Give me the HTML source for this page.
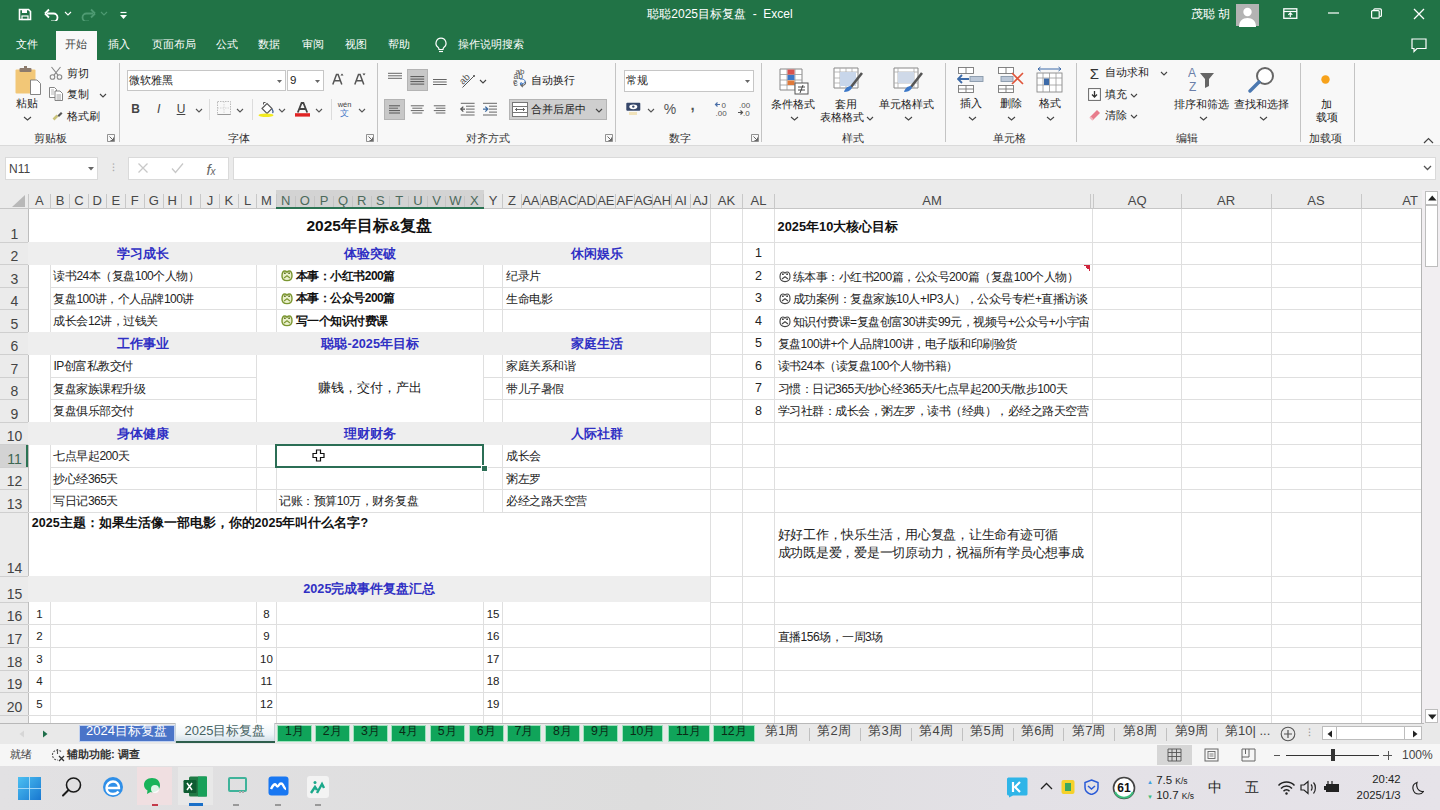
<!DOCTYPE html>
<html><head><meta charset="utf-8"><style>
html,body{margin:0;padding:0;width:1440px;height:810px;overflow:hidden;background:#fff;font-family:"Liberation Sans", sans-serif;}
.a{position:absolute;}
.t{white-space:nowrap;}
</style></head><body>
<div class="a" style="left:0.00px;top:0.00px;width:1440.00px;height:60.00px;background:#217346"></div>
<svg class="a" style="left:18.00px;top:8.00px;" width="14" height="13" viewBox="0 0 14 13"><path d="M1.5 1.5h9l2 2v8h-11z" fill="none" stroke="#fff" stroke-width="1.6"/><rect x="4" y="1.5" width="5" height="3.5" fill="#fff"/><rect x="4" y="8" width="6" height="3.5" fill="none" stroke="#fff" stroke-width="1.2"/></svg>
<svg class="a" style="left:44.00px;top:8.00px;" width="16" height="13" viewBox="0 0 16 13"><path d="M3 5.5h6.5a4 4 0 0 1 0 8H7" fill="none" stroke="#fff" stroke-width="1.8"/><path d="M1 5.5l4-4M1 5.5l4 4" fill="none" stroke="#fff" stroke-width="1.8"/></svg>
<svg class="a" style="left:64.00px;top:11.00px;" width="8" height="6" viewBox="0 0 8 6"><path d="M1 1l3 3 3-3" fill="none" stroke="#fff" stroke-width="1.1"/></svg>
<svg class="a" style="left:80.00px;top:8.00px;" width="16" height="13" viewBox="0 0 16 13"><path d="M13 5.5H6.5a4 4 0 0 0 0 8H9" fill="none" stroke="#4e9a72" stroke-width="1.8"/><path d="M15 5.5l-4-4M15 5.5l-4 4" fill="none" stroke="#4e9a72" stroke-width="1.8"/></svg>
<svg class="a" style="left:100.00px;top:11.00px;" width="8" height="6" viewBox="0 0 8 6"><path d="M1 1l3 3 3-3" fill="none" stroke="#4e9a72" stroke-width="1.1"/></svg>
<svg class="a" style="left:119.00px;top:11.00px;" width="9" height="9" viewBox="0 0 9 9"><path d="M1.5 1.5h6" stroke="#fff" stroke-width="1.2"/><path d="M1 4h7l-3.5 4z" fill="#fff"/></svg>
<div class="a t" style="left:570.00px;width:300px;text-align:center;top:6.00px;line-height:16.80px;font-size:12px;color:#fff;">聪聪2025目标复盘&nbsp; -&nbsp; Excel</div>
<div class="a t" style="left:1190.50px;top:6.00px;line-height:16.80px;font-size:12px;color:#fff;">茂聪 胡</div>
<div class="a" style="left:1236.00px;top:3.50px;width:22.50px;height:22.50px;background:#b3b3b3"></div>
<svg class="a" style="left:1236.00px;top:3.50px;" width="23" height="23" viewBox="0 0 23 23"><circle cx="11.5" cy="8" r="4.2" fill="#fff"/><path d="M3 23c0-6 3.5-9 8.5-9s8.5 3 8.5 9z" fill="#fff"/></svg>
<svg class="a" style="left:1283.00px;top:8.00px;" width="15" height="11" viewBox="0 0 15 11"><rect x="0.8" y="0.8" width="13" height="9.5" fill="none" stroke="#fff" stroke-width="1.3"/><path d="M0.8 3.5h13" stroke="#fff" stroke-width="1.2"/><path d="M7.3 9V5M5.3 6.8l2-2 2 2" fill="none" stroke="#fff" stroke-width="1.1"/></svg>
<svg class="a" style="left:1328.00px;top:12.00px;" width="11" height="2" viewBox="0 0 11 2"><path d="M0 1h11" stroke="#fff" stroke-width="1.2"/></svg>
<svg class="a" style="left:1371.00px;top:8.00px;" width="11" height="11" viewBox="0 0 11 11"><rect x="0.6" y="2.6" width="7.6" height="7.6" rx="1" fill="none" stroke="#fff" stroke-width="1.2"/><path d="M2.8 2.6v-0.8a1 1 0 0 1 1-1h5.4a1.2 1.2 0 0 1 1.2 1.2v5.4a1 1 0 0 1-1 1h-0.8" fill="none" stroke="#fff" stroke-width="1.2"/></svg>
<svg class="a" style="left:1413.00px;top:7.50px;" width="12" height="12" viewBox="0 0 12 12"><path d="M1 1l10 10M11 1L1 11" stroke="#fff" stroke-width="1.3"/></svg>
<svg class="a" style="left:1411.00px;top:38.00px;" width="16" height="15" viewBox="0 0 16 15"><path d="M1 1h14v9.5H6l-3 3v-3H1z" fill="none" stroke="#fff" stroke-width="1.2"/></svg>
<div class="a" style="left:56.40px;top:31.00px;width:41.00px;height:29.50px;background:#f8f8f8"></div>
<div class="a t" style="left:15.60px;top:37.09px;line-height:15.82px;font-size:11.3px;color:#fff;">文件</div>
<div class="a t" style="left:65.20px;top:37.09px;line-height:15.82px;font-size:11.3px;color:#444;">开始</div>
<div class="a t" style="left:108.00px;top:37.09px;line-height:15.82px;font-size:11.3px;color:#fff;">插入</div>
<div class="a t" style="left:151.80px;top:37.09px;line-height:15.82px;font-size:11.3px;color:#fff;">页面布局</div>
<div class="a t" style="left:216.00px;top:37.09px;line-height:15.82px;font-size:11.3px;color:#fff;">公式</div>
<div class="a t" style="left:258.30px;top:37.09px;line-height:15.82px;font-size:11.3px;color:#fff;">数据</div>
<div class="a t" style="left:302.00px;top:37.09px;line-height:15.82px;font-size:11.3px;color:#fff;">审阅</div>
<div class="a t" style="left:344.80px;top:37.09px;line-height:15.82px;font-size:11.3px;color:#fff;">视图</div>
<div class="a t" style="left:387.50px;top:37.09px;line-height:15.82px;font-size:11.3px;color:#fff;">帮助</div>
<div class="a t" style="left:458.30px;top:37.09px;line-height:15.82px;font-size:11.3px;color:#fff;">操作说明搜索</div>
<svg class="a" style="left:434.00px;top:37.00px;" width="14" height="16" viewBox="0 0 14 16"><path d="M7 1.2a5 5 0 0 0-3 9c0.8 0.6 1 1.4 1 2.3h4c0-0.9 0.2-1.7 1-2.3a5 5 0 0 0-3-9z" fill="none" stroke="#fff" stroke-width="1.2"/><path d="M5 14.5h4" stroke="#fff" stroke-width="1.2"/></svg>
<div class="a" style="left:0.00px;top:60.00px;width:1440.00px;height:84.50px;background:#f8f8f8"></div>
<div class="a" style="left:0.00px;top:144.50px;width:1440.00px;height:1.00px;background:#dadada"></div>
<div class="a" style="left:118.50px;top:63.00px;width:1.00px;height:79.00px;background:#c4c4c4"></div>
<div class="a" style="left:376.50px;top:63.00px;width:1.00px;height:79.00px;background:#c4c4c4"></div>
<div class="a" style="left:615.30px;top:63.00px;width:1.00px;height:79.00px;background:#c4c4c4"></div>
<div class="a" style="left:760.60px;top:63.00px;width:1.00px;height:79.00px;background:#c4c4c4"></div>
<div class="a" style="left:944.50px;top:63.00px;width:1.00px;height:79.00px;background:#c4c4c4"></div>
<div class="a" style="left:1076.30px;top:63.00px;width:1.00px;height:79.00px;background:#c4c4c4"></div>
<div class="a" style="left:1299.70px;top:63.00px;width:1.00px;height:79.00px;background:#c4c4c4"></div>
<div class="a" style="left:1353.60px;top:63.00px;width:1.00px;height:79.00px;background:#c4c4c4"></div>
<div class="a t" style="left:0.80px;width:100px;text-align:center;top:131.09px;line-height:15.82px;font-size:11.3px;color:#333;">剪贴板</div>
<div class="a t" style="left:189.30px;width:100px;text-align:center;top:131.09px;line-height:15.82px;font-size:11.3px;color:#333;">字体</div>
<div class="a t" style="left:437.80px;width:100px;text-align:center;top:131.09px;line-height:15.82px;font-size:11.3px;color:#333;">对齐方式</div>
<div class="a t" style="left:630.30px;width:100px;text-align:center;top:131.09px;line-height:15.82px;font-size:11.3px;color:#333;">数字</div>
<div class="a t" style="left:802.60px;width:100px;text-align:center;top:131.09px;line-height:15.82px;font-size:11.3px;color:#333;">样式</div>
<div class="a t" style="left:959.00px;width:100px;text-align:center;top:131.09px;line-height:15.82px;font-size:11.3px;color:#333;">单元格</div>
<div class="a t" style="left:1136.80px;width:100px;text-align:center;top:131.09px;line-height:15.82px;font-size:11.3px;color:#333;">编辑</div>
<div class="a t" style="left:1275.90px;width:100px;text-align:center;top:131.09px;line-height:15.82px;font-size:11.3px;color:#333;">加载项</div>
<svg class="a" style="left:107.00px;top:134.00px;" width="8" height="8" viewBox="0 0 8 8"><path d="M0.5 0.5h7v7h-7z" fill="none" stroke="#777" stroke-width="0.8"/><path d="M2.5 2.5l4 4M6.5 3.5v3h-3" fill="none" stroke="#555" stroke-width="0.9"/></svg>
<svg class="a" style="left:366.00px;top:134.00px;" width="8" height="8" viewBox="0 0 8 8"><path d="M0.5 0.5h7v7h-7z" fill="none" stroke="#777" stroke-width="0.8"/><path d="M2.5 2.5l4 4M6.5 3.5v3h-3" fill="none" stroke="#555" stroke-width="0.9"/></svg>
<svg class="a" style="left:605.00px;top:134.00px;" width="8" height="8" viewBox="0 0 8 8"><path d="M0.5 0.5h7v7h-7z" fill="none" stroke="#777" stroke-width="0.8"/><path d="M2.5 2.5l4 4M6.5 3.5v3h-3" fill="none" stroke="#555" stroke-width="0.9"/></svg>
<svg class="a" style="left:751.00px;top:134.00px;" width="8" height="8" viewBox="0 0 8 8"><path d="M0.5 0.5h7v7h-7z" fill="none" stroke="#777" stroke-width="0.8"/><path d="M2.5 2.5l4 4M6.5 3.5v3h-3" fill="none" stroke="#555" stroke-width="0.9"/></svg>
<svg class="a" style="left:1423.00px;top:137.00px;" width="11" height="7" viewBox="0 0 11 7"><path d="M1 6l4.5-4.5L10 6" fill="none" stroke="#444" stroke-width="1.2"/></svg>
<svg class="a" style="left:14.00px;top:66.00px;" width="30" height="30" viewBox="0 0 30 30"><rect x="1.5" y="3.5" width="20" height="24" rx="1" fill="#f2c777"/><rect x="5.5" y="2" width="12" height="4" rx="1" fill="#8d7b6d"/><rect x="10" y="0" width="3" height="3" fill="#8d7b6d"/><path d="M16.5 14h6.5l3.5 3.5v11h-10z" fill="#fff" stroke="#777" stroke-width="0.9"/></svg>
<div class="a t" style="left:6.50px;width:40px;text-align:center;top:95.59px;line-height:15.82px;font-size:11.3px;color:#222;">粘贴</div>
<svg class="a" style="left:23.00px;top:116.00px;" width="9" height="5" viewBox="0 0 9 5"><path d="M1 1l3.5 3L8 1" fill="none" stroke="#444" stroke-width="1.1"/></svg>
<svg class="a" style="left:49.00px;top:66.00px;" width="14" height="14" viewBox="0 0 14 14"><circle cx="3.5" cy="11" r="2.3" fill="none" stroke="#888" stroke-width="1.1"/><circle cx="10.5" cy="11" r="2.3" fill="none" stroke="#888" stroke-width="1.1"/><path d="M5 9.2L11.5 1M9 9.2L2.5 1" stroke="#888" stroke-width="1.1"/></svg>
<div class="a t" style="left:67.00px;top:65.59px;line-height:15.82px;font-size:11.3px;color:#222;">剪切</div>
<svg class="a" style="left:49.00px;top:87.00px;" width="14" height="14" viewBox="0 0 14 14"><path d="M0.5 0.5h5l2 2v8h-7z" fill="#fff" stroke="#777" stroke-width="0.9"/><path d="M2 3h3M2 5h3M2 7h3" stroke="#999" stroke-width="0.7"/><path d="M6 4h5l2.5 2.5v7H6z" fill="#fff" stroke="#777" stroke-width="0.9"/><path d="M7.5 8h4.5M7.5 10h4.5M7.5 12h4.5" stroke="#888" stroke-width="0.8"/></svg>
<div class="a t" style="left:67.00px;top:87.09px;line-height:15.82px;font-size:11.3px;color:#222;">复制</div>
<svg class="a" style="left:99.00px;top:93.00px;" width="8" height="5" viewBox="0 0 8 5"><path d="M1 1l3 3 3-3" fill="none" stroke="#444" stroke-width="1.1"/></svg>
<svg class="a" style="left:52.00px;top:110.00px;" width="11" height="11" viewBox="0 0 11 11"><path d="M1.5 9.5l4-4" stroke="#c9c27a" stroke-width="2.6"/><path d="M5.5 5.5l3.5-3.5 1.5 1.5-3.5 3.5z" fill="#555"/></svg>
<div class="a t" style="left:67.00px;top:108.59px;line-height:15.82px;font-size:11.3px;color:#222;">格式刷</div>
<div class="a" style="left:126.50px;top:69.60px;width:159.00px;height:21.80px;background:#fff;border:1px solid #c6c6c6;box-sizing:border-box"></div>
<div class="a t" style="left:129.00px;top:72.59px;line-height:15.82px;font-size:11.3px;color:#222;">微软雅黑</div>
<svg class="a" style="left:276.50px;top:79.50px;" width="5" height="3" viewBox="0 0 5 3"><path d="M0 0h5L2.5 3z" fill="#666"/></svg>
<div class="a" style="left:287.40px;top:69.60px;width:36.60px;height:21.80px;background:#fff;border:1px solid #c6c6c6;box-sizing:border-box"></div>
<div class="a t" style="left:290.00px;top:72.45px;line-height:16.10px;font-size:11.5px;color:#222;">9</div>
<svg class="a" style="left:314.50px;top:79.50px;" width="5" height="3" viewBox="0 0 5 3"><path d="M0 0h5L2.5 3z" fill="#666"/></svg>
<svg class="a" style="left:332.00px;top:73.00px;" width="12" height="12" viewBox="0 0 12 12"><path d="M0.8 11.5L4.5 1.5h1.6L9.8 11.5M2.5 7.8h5.6" fill="none" stroke="#555" stroke-width="1.5"/><path d="M8.5 2.5L10 0.5l1.5 2z" fill="#444"/></svg>
<svg class="a" style="left:354.00px;top:73.00px;" width="12" height="12" viewBox="0 0 12 12"><path d="M0.8 11.5L4.5 1.5h1.6L9.8 11.5M2.5 7.8h5.6" fill="none" stroke="#555" stroke-width="1.5"/><path d="M8.5 0.5h3L10 2.5z" fill="#444"/></svg>
<div class="a t" style="left:128.50px;width:14px;text-align:center;top:101.10px;line-height:16.80px;font-size:12px;color:#444;font-weight:bold;">B</div>
<div class="a t" style="left:151.80px;width:14px;text-align:center;top:100.75px;line-height:17.50px;font-size:12.5px;color:#444;font-family:"Liberation Serif",serif"><i>I</i></div>
<div class="a t" style="left:174.00px;width:14px;text-align:center;top:101.10px;line-height:16.80px;font-size:12px;color:#444;"><u>U</u></div>
<svg class="a" style="left:194.50px;top:108.00px;" width="8" height="5" viewBox="0 0 8 5"><path d="M1 1l3 3 3-3" fill="none" stroke="#555" stroke-width="1.1"/></svg>
<svg class="a" style="left:236.00px;top:108.00px;" width="8" height="5" viewBox="0 0 8 5"><path d="M1 1l3 3 3-3" fill="none" stroke="#555" stroke-width="1.1"/></svg>
<svg class="a" style="left:278.00px;top:108.00px;" width="8" height="5" viewBox="0 0 8 5"><path d="M1 1l3 3 3-3" fill="none" stroke="#555" stroke-width="1.1"/></svg>
<svg class="a" style="left:315.00px;top:108.00px;" width="8" height="5" viewBox="0 0 8 5"><path d="M1 1l3 3 3-3" fill="none" stroke="#555" stroke-width="1.1"/></svg>
<svg class="a" style="left:358.00px;top:108.00px;" width="8" height="5" viewBox="0 0 8 5"><path d="M1 1l3 3 3-3" fill="none" stroke="#555" stroke-width="1.1"/></svg>
<div class="a" style="left:209.00px;top:99.00px;width:1.00px;height:21.00px;background:#dcdcdc"></div>
<div class="a" style="left:252.00px;top:99.00px;width:1.00px;height:21.00px;background:#dcdcdc"></div>
<div class="a" style="left:330.80px;top:99.00px;width:1.00px;height:21.00px;background:#dcdcdc"></div>
<svg class="a" style="left:217.00px;top:101.00px;" width="14" height="15" viewBox="0 0 14 15"><rect x="0.5" y="0.5" width="13" height="13" fill="none" stroke="#bbb" stroke-width="1" stroke-dasharray="1.5 1"/><path d="M7 0.5v13M0.5 7h13" stroke="#ccc" stroke-width="0.8" stroke-dasharray="1.5 1"/><path d="M0.5 13.5h13" stroke="#999" stroke-width="1"/></svg>
<svg class="a" style="left:257.00px;top:101.00px;" width="18" height="16" viewBox="0 0 18 16"><path d="M5 7.5l5-5 5 5-5 5z" fill="#fff" stroke="#555" stroke-width="1.1"/><path d="M6.5 3.5V1.5h2" fill="none" stroke="#555" stroke-width="1"/><path d="M15 8c1 1.5 1.5 3 0.5 4" fill="none" stroke="#3a5a90" stroke-width="1.2"/><ellipse cx="9" cy="14.3" rx="7.5" ry="1.8" fill="#f2ea20"/></svg>
<svg class="a" style="left:295.00px;top:102.00px;" width="15" height="15" viewBox="0 0 15 15"><path d="M2.8 10.5L6.6 1h1.8l3.8 9.5M4.3 7h6.4" fill="none" stroke="#444" stroke-width="1.8"/><rect x="0" y="11.2" width="15" height="3.4" fill="#e02424"/></svg>
<div class="a t" style="left:334.60px;width:20px;text-align:center;top:99.75px;line-height:10.50px;font-size:7.5px;color:#444;">wén</div>
<div class="a t" style="left:334.60px;width:20px;text-align:center;top:107.85px;line-height:11.90px;font-size:8.5px;color:#4a7ac8;">文</div>
<div class="a" style="left:407.00px;top:69.40px;width:20.80px;height:21.60px;background:#c8c8c8;border:1px solid #b4b4b4;box-sizing:border-box"></div>
<div class="a" style="left:384.40px;top:98.90px;width:20.80px;height:21.40px;background:#c8c8c8;border:1px solid #b4b4b4;box-sizing:border-box"></div>
<svg class="a" style="left:0.00px;top:0.00px;" width="500" height="130" viewBox="0 0 500 130"><path d="M388.00 73.30H402.00" stroke="#666" stroke-width="1.0"/><path d="M388.00 75.80H402.00" stroke="#666" stroke-width="1.0"/><path d="M388.00 78.30H402.00" stroke="#666" stroke-width="1.0"/><path d="M410.40 76.60H424.20" stroke="#555" stroke-width="1.0"/><path d="M410.40 79.10H424.20" stroke="#555" stroke-width="1.0"/><path d="M410.40 81.60H424.20" stroke="#555" stroke-width="1.0"/><path d="M410.40 84.10H424.20" stroke="#555" stroke-width="1.0"/><path d="M433.00 79.50H446.70" stroke="#666" stroke-width="1.0"/><path d="M433.00 82.00H446.70" stroke="#666" stroke-width="1.0"/><path d="M433.00 84.50H446.70" stroke="#666" stroke-width="1.0"/><path d="M389.00 105.80H400.00" stroke="#555" stroke-width="1.0"/><path d="M389.00 113.00H400.00" stroke="#555" stroke-width="1.0"/><path d="M389.00 108.20H398.00" stroke="#666" stroke-width="1.0"/><path d="M389.00 110.60H400.00" stroke="#555" stroke-width="1.0"/><path d="M410.80 105.80H423.80" stroke="#666" stroke-width="1.0"/><path d="M410.80 110.60H423.80" stroke="#666" stroke-width="1.0"/><path d="M412.30 108.20H422.30" stroke="#666" stroke-width="1.0"/><path d="M412.30 113.00H422.30" stroke="#666" stroke-width="1.0"/><path d="M433.80 105.80H445.40" stroke="#666" stroke-width="1.0"/><path d="M433.80 110.60H445.40" stroke="#666" stroke-width="1.0"/><path d="M435.80 108.20H445.40" stroke="#666" stroke-width="1.0"/><path d="M435.80 113.00H445.40" stroke="#666" stroke-width="1.0"/><path d="M460.80 103.30H474.60" stroke="#666" stroke-width="1.0"/><path d="M460.80 115.00H474.60" stroke="#666" stroke-width="1.0"/><path d="M466.00 106.20H474.60" stroke="#666" stroke-width="1.0"/><path d="M466.00 109.10H474.60" stroke="#666" stroke-width="1.0"/><path d="M466.00 112.10H474.60" stroke="#666" stroke-width="1.0"/><path d="M483.00 103.30H497.00" stroke="#666" stroke-width="1.0"/><path d="M483.00 115.00H497.00" stroke="#666" stroke-width="1.0"/><path d="M489.00 106.20H497.00" stroke="#666" stroke-width="1.0"/><path d="M489.00 109.10H497.00" stroke="#666" stroke-width="1.0"/><path d="M489.00 112.10H497.00" stroke="#666" stroke-width="1.0"/><path d="M465 109.1h-4.2M463.3 106.6l-2.5 2.5 2.5 2.5" fill="none" stroke="#555" stroke-width="1.3"/><path d="M483 109.1h4.6M485.3 106.6l2.5 2.5-2.5 2.5" fill="none" stroke="#3c6aa0" stroke-width="1.3"/><text x="0" y="0" font-size="9.5" fill="#555" font-family="Liberation Sans" transform="translate(463 85) rotate(-45)">ab</text><path d="M462.5 87.5L474.5 75.5" stroke="#555" stroke-width="1"/><circle cx="474" cy="76" r="1" fill="#555"/></svg>
<svg class="a" style="left:478.50px;top:78.50px;" width="8" height="5" viewBox="0 0 8 5"><path d="M1 1l3 3 3-3" fill="none" stroke="#444" stroke-width="1.1"/></svg>
<svg class="a" style="left:512.00px;top:71.00px;" width="16" height="17" viewBox="0 0 16 17"><text x="1.5" y="8.3" font-size="8.5" fill="#555" font-family="Liberation Sans">ab</text><text x="1.5" y="15" font-size="8.5" fill="#555" font-family="Liberation Sans">c</text><path d="M13.5 10.5c0.5 2.5-1 4-4 4M10.8 12.6l-1.8 1.9 2 1.6" fill="none" stroke="#666" stroke-width="1.1"/></svg>
<div class="a t" style="left:531.00px;top:73.29px;line-height:15.82px;font-size:11.3px;color:#222;">自动换行</div>
<div class="a t" style="left:512.00px;width:16px;text-align:center;top:66.40px;line-height:11.20px;font-size:8px;color:#555;">ab</div>
<svg class="a" style="left:513.00px;top:77.00px;" width="15" height="8" viewBox="0 0 15 8"><text x="0" y="7" font-size="8" fill="#555" font-family="Liberation Sans">c</text><path d="M7 2c4 0 5 1 5 2.5S10 7 7 7m1.5-2L7 7l1.5 1.5" fill="none" stroke="#3c78c8" stroke-width="1"/></svg>
<div class="a" style="left:509.40px;top:98.90px;width:98.00px;height:21.40px;background:#cfcfcf;border:1px solid #b4b4b4;box-sizing:border-box"></div>
<svg class="a" style="left:512.00px;top:102.00px;" width="16" height="15" viewBox="0 0 16 15"><rect x="0.5" y="0.5" width="15" height="14" fill="#fff" stroke="#777" stroke-width="1"/><path d="M0.5 4.5h15M0.5 10.5h15" stroke="#777" stroke-width="1"/><path d="M3.5 7.5h9M5 6l-1.5 1.5L5 9M11 6l1.5 1.5L11 9" fill="none" stroke="#555" stroke-width="0.9"/></svg>
<div class="a t" style="left:530.60px;top:101.69px;line-height:15.82px;font-size:11.3px;color:#222;">合并后居中</div>
<svg class="a" style="left:595.00px;top:108.00px;" width="8" height="5" viewBox="0 0 8 5"><path d="M1 1l3 3 3-3" fill="none" stroke="#444" stroke-width="1.1"/></svg>
<div class="a" style="left:623.50px;top:69.60px;width:130.00px;height:22.00px;background:#fff;border:1px solid #c6c6c6;box-sizing:border-box"></div>
<div class="a t" style="left:626.00px;top:72.59px;line-height:15.82px;font-size:11.3px;color:#222;">常规</div>
<svg class="a" style="left:745.00px;top:79.50px;" width="5" height="3" viewBox="0 0 5 3"><path d="M0 0h5L2.5 3z" fill="#666"/></svg>
<svg class="a" style="left:626.00px;top:102.00px;" width="16" height="14" viewBox="0 0 16 14"><rect x="0.3" y="0.8" width="14" height="8" rx="1" fill="#36476a"/><ellipse cx="7.3" cy="4.8" rx="4" ry="2.4" fill="#fff"/><circle cx="7.3" cy="4.6" r="1.2" fill="#36476a"/><rect x="3" y="10" width="8" height="3" fill="#f1e3bb"/></svg>
<svg class="a" style="left:647.00px;top:108.00px;" width="8" height="5" viewBox="0 0 8 5"><path d="M1 1l3 3 3-3" fill="none" stroke="#555" stroke-width="1.1"/></svg>
<div class="a t" style="left:660.00px;width:20px;text-align:center;top:99.70px;line-height:19.60px;font-size:14px;color:#555;">%</div>
<div class="a t" style="left:687.50px;width:10px;text-align:center;top:94.00px;line-height:21.00px;font-size:15px;color:#555;font-weight:bold;">,</div>
<svg class="a" style="left:714.00px;top:100.00px;" width="16" height="18" viewBox="0 0 16 18"><path d="M6 4.5H1.5M3.5 2.5l-2 2 2 2" fill="none" stroke="#4a6fa8" stroke-width="1.2"/><text x="7.5" y="8" font-size="8" fill="#555" font-family="Liberation Sans">0</text><text x="1.5" y="16" font-size="8" fill="#555" font-family="Liberation Sans">.00</text></svg>
<svg class="a" style="left:737.00px;top:100.00px;" width="16" height="18" viewBox="0 0 16 18"><text x="2" y="8" font-size="8" fill="#555" font-family="Liberation Sans">.00</text><path d="M1 12.5h4.5M3.5 10.5l2 2-2 2" fill="none" stroke="#555" stroke-width="1.2"/><text x="6" y="16" font-size="8" fill="#555" font-family="Liberation Sans">.0</text></svg>
<svg class="a" style="left:779.00px;top:68.00px;" width="30" height="27" viewBox="0 0 30 27"><path d="M1 1h22v21H1z" fill="#fff" stroke="#888" stroke-width="1"/><path d="M1 6.5h22M1 12h22M1 17h22M8 1v21M16 1v21" stroke="#999" stroke-width="0.8"/><rect x="8.5" y="1.5" width="7" height="5" fill="#d9534f"/><rect x="8.5" y="7" width="7" height="5" fill="#3c78c8"/><rect x="8.5" y="12.5" width="7" height="4.5" fill="#e07a3a"/><rect x="16" y="15" width="13" height="11" fill="#fff" stroke="#555" stroke-width="1"/><path d="M19 19h7M19 22h7M24 17l-3 8" stroke="#333" stroke-width="0.9"/></svg>
<div class="a t" style="left:762.80px;width:60px;text-align:center;top:96.69px;line-height:15.82px;font-size:11.3px;color:#222;">条件格式</div>
<svg class="a" style="left:789.50px;top:116.00px;" width="9" height="5" viewBox="0 0 9 5"><path d="M1 1l3.5 3L8 1" fill="none" stroke="#444" stroke-width="1.1"/></svg>
<svg class="a" style="left:833.00px;top:67.00px;" width="30" height="28" viewBox="0 0 30 28"><path d="M1 1h24v20H1z" fill="#fff" stroke="#888" stroke-width="1"/><path d="M1 5h24M1 11h24M1 16h24M7 1v20M13 1v20M19 1v20" stroke="#aaa" stroke-width="0.8"/><rect x="7" y="5" width="16" height="14" fill="#c8d6ea"/><path d="M29 6L18 20" stroke="#555" stroke-width="2.6"/><path d="M18 19c-3 0-6 2-7 6 3 0 6-1 8-4z" fill="#3c78c8"/></svg>
<div class="a t" style="left:826.00px;width:40px;text-align:center;top:96.69px;line-height:15.82px;font-size:11.3px;color:#222;">套用</div>
<div class="a t" style="left:812.00px;width:60px;text-align:center;top:110.39px;line-height:15.82px;font-size:11.3px;color:#222;">表格格式</div>
<svg class="a" style="left:866.00px;top:116.00px;" width="8" height="5" viewBox="0 0 8 5"><path d="M1 1l3 3 3-3" fill="none" stroke="#444" stroke-width="1.1"/></svg>
<svg class="a" style="left:893.00px;top:67.00px;" width="30" height="28" viewBox="0 0 30 28"><path d="M1 1h24v20H1z" fill="#fff" stroke="#888" stroke-width="1"/><path d="M1 5h24M1 16h24M5 1v20M21 1v20" stroke="#aaa" stroke-width="0.8"/><rect x="5" y="5" width="16" height="11" fill="#cfd9e8"/><path d="M29 6L18 20" stroke="#555" stroke-width="2.6"/><path d="M18 19c-3 0-6 2-7 6 3 0 6-1 8-4z" fill="#3c78c8"/></svg>
<div class="a t" style="left:871.70px;width:70px;text-align:center;top:96.69px;line-height:15.82px;font-size:11.3px;color:#222;">单元格样式</div>
<svg class="a" style="left:903.50px;top:116.00px;" width="9" height="5" viewBox="0 0 9 5"><path d="M1 1l3.5 3L8 1" fill="none" stroke="#444" stroke-width="1.1"/></svg>
<svg class="a" style="left:957.00px;top:66.00px;" width="28" height="28" viewBox="0 0 28 28"><rect x="1.5" y="1.5" width="15" height="6" fill="#fff" stroke="#777" stroke-width="0.9"/><path d="M9 1.5v6" stroke="#777" stroke-width="0.9"/><rect x="1.5" y="19.5" width="15" height="7" fill="#fff" stroke="#777" stroke-width="0.9"/><path d="M9 19.5v7M1.5 23h15" stroke="#777" stroke-width="0.9"/><rect x="13" y="10.5" width="13" height="5" fill="#bcc8d8" stroke="#8899aa" stroke-width="0.9"/><path d="M12 13H1M5 9l-4 4 4 4" fill="none" stroke="#3c6aa8" stroke-width="1.8"/></svg>
<div class="a t" style="left:951.20px;width:40px;text-align:center;top:95.79px;line-height:15.82px;font-size:11.3px;color:#222;">插入</div>
<svg class="a" style="left:967.50px;top:116.00px;" width="9" height="5" viewBox="0 0 9 5"><path d="M1 1l3.5 3L8 1" fill="none" stroke="#444" stroke-width="1.1"/></svg>
<svg class="a" style="left:997.00px;top:66.00px;" width="28" height="28" viewBox="0 0 28 28"><rect x="1.5" y="1.5" width="15" height="6" fill="#fff" stroke="#777" stroke-width="0.9"/><path d="M9 1.5v6" stroke="#777" stroke-width="0.9"/><rect x="1.5" y="19.5" width="15" height="7" fill="#fff" stroke="#777" stroke-width="0.9"/><path d="M9 19.5v7M1.5 23h15" stroke="#777" stroke-width="0.9"/><rect x="4" y="10.5" width="12" height="5" fill="#bcc8d8" stroke="#8899aa" stroke-width="0.9"/><path d="M15 7l11 11M26 7L15 18" stroke="#e0553a" stroke-width="1.6"/></svg>
<div class="a t" style="left:990.80px;width:40px;text-align:center;top:95.79px;line-height:15.82px;font-size:11.3px;color:#222;">删除</div>
<svg class="a" style="left:1007.00px;top:116.00px;" width="9" height="5" viewBox="0 0 9 5"><path d="M1 1l3.5 3L8 1" fill="none" stroke="#444" stroke-width="1.1"/></svg>
<svg class="a" style="left:1036.00px;top:66.00px;" width="28" height="29" viewBox="0 0 28 29"><path d="M2 3h23M2 3l2.5-2M2 3l2.5 2M25 3l-2.5-2M25 3l-2.5 2" fill="none" stroke="#3c6aa8" stroke-width="1"/><rect x="1" y="7" width="25" height="19" fill="#fff" stroke="#888" stroke-width="0.9"/><path d="M1 12h25M1 19h25M7 7v19M13.5 7v19M20 7v19" stroke="#999" stroke-width="0.8"/><rect x="8" y="12.5" width="5" height="6.5" fill="#3c6aa8"/></svg>
<div class="a t" style="left:1029.50px;width:40px;text-align:center;top:95.79px;line-height:15.82px;font-size:11.3px;color:#222;">格式</div>
<svg class="a" style="left:1046.00px;top:116.00px;" width="9" height="5" viewBox="0 0 9 5"><path d="M1 1l3.5 3L8 1" fill="none" stroke="#444" stroke-width="1.1"/></svg>
<div class="a t" style="left:1084.30px;width:20px;text-align:center;top:62.50px;line-height:21.00px;font-size:15px;color:#333;">Σ</div>
<div class="a t" style="left:1105.00px;top:65.09px;line-height:15.82px;font-size:11.3px;color:#222;">自动求和</div>
<svg class="a" style="left:1159.50px;top:71.00px;" width="8" height="5" viewBox="0 0 8 5"><path d="M1 1l3 3 3-3" fill="none" stroke="#444" stroke-width="1.1"/></svg>
<svg class="a" style="left:1088.00px;top:88.00px;" width="13" height="13" viewBox="0 0 13 13"><rect x="0.6" y="0.6" width="11.8" height="11.8" fill="#fff" stroke="#666" stroke-width="1"/><path d="M6.5 3v6M4 6.5l2.5 2.5 2.5-2.5" fill="none" stroke="#333" stroke-width="1.3"/></svg>
<div class="a t" style="left:1105.00px;top:86.79px;line-height:15.82px;font-size:11.3px;color:#222;">填充</div>
<svg class="a" style="left:1130.00px;top:93.00px;" width="8" height="5" viewBox="0 0 8 5"><path d="M1 1l3 3 3-3" fill="none" stroke="#444" stroke-width="1.1"/></svg>
<svg class="a" style="left:1089.00px;top:109.00px;" width="12" height="12" viewBox="0 0 12 12"><path d="M1 8l7-7 3 3-7 7z" fill="#e87c8c"/><path d="M1 8l3 3" stroke="#f4b8c0" stroke-width="2"/></svg>
<div class="a t" style="left:1105.00px;top:107.59px;line-height:15.82px;font-size:11.3px;color:#222;">清除</div>
<svg class="a" style="left:1130.00px;top:114.00px;" width="8" height="5" viewBox="0 0 8 5"><path d="M1 1l3 3 3-3" fill="none" stroke="#444" stroke-width="1.1"/></svg>
<svg class="a" style="left:1188.00px;top:66.00px;" width="28" height="26" viewBox="0 0 28 26"><text x="0" y="11" font-size="12" fill="#6b7fa8" font-family="Liberation Sans">A</text><text x="1" y="25" font-size="12" fill="#6b7fa8" font-family="Liberation Sans">Z</text><path d="M12 7h14l-5 6v7l-4 2v-9z" fill="#666"/></svg>
<div class="a t" style="left:1166.30px;width:70px;text-align:center;top:96.69px;line-height:15.82px;font-size:11.3px;color:#222;">排序和筛选</div>
<svg class="a" style="left:1199.00px;top:116.00px;" width="9" height="5" viewBox="0 0 9 5"><path d="M1 1l3.5 3L8 1" fill="none" stroke="#444" stroke-width="1.1"/></svg>
<svg class="a" style="left:1248.00px;top:66.00px;" width="28" height="27" viewBox="0 0 28 27"><circle cx="17" cy="10" r="8" fill="#fff" stroke="#666" stroke-width="2"/><path d="M11 16L2 25" stroke="#4b78b0" stroke-width="3.4" stroke-linecap="round"/></svg>
<div class="a t" style="left:1226.70px;width:70px;text-align:center;top:96.69px;line-height:15.82px;font-size:11.3px;color:#222;">查找和选择</div>
<svg class="a" style="left:1259.00px;top:116.00px;" width="9" height="5" viewBox="0 0 9 5"><path d="M1 1l3.5 3L8 1" fill="none" stroke="#444" stroke-width="1.1"/></svg>
<svg class="a" style="left:1320.00px;top:74.00px;" width="11" height="11" viewBox="0 0 11 11"><circle cx="5.5" cy="5.5" r="4.2" fill="#f7a21b"/></svg>
<div class="a t" style="left:1316.30px;width:20px;text-align:center;top:96.69px;line-height:15.82px;font-size:11.3px;color:#222;">加</div>
<div class="a t" style="left:1306.80px;width:40px;text-align:center;top:110.29px;line-height:15.82px;font-size:11.3px;color:#222;">载项</div>
<div class="a" style="left:0.00px;top:145.50px;width:1440.00px;height:577.50px;background:#ebebeb"></div>
<div class="a" style="left:5.00px;top:157.00px;width:93.00px;height:23.00px;background:#fff;border:1px solid #dadada;box-sizing:border-box"></div>
<div class="a t" style="left:9.00px;top:160.90px;line-height:16.80px;font-size:12px;color:#444;">N11</div>
<svg class="a" style="left:87.50px;top:167.00px;" width="6" height="3.5" viewBox="0 0 6 3.5"><path d="M0 0h6L3 3.5z" fill="#666"/></svg>
<div class="a t" style="left:108.00px;width:10px;text-align:center;top:160.30px;line-height:15.40px;font-size:11px;color:#aaa;">⁝</div>
<div class="a" style="left:127.50px;top:157.00px;width:101.00px;height:23.00px;background:#fff;border:1px solid #dadada;box-sizing:border-box"></div>
<svg class="a" style="left:137.00px;top:162.00px;" width="12" height="12" viewBox="0 0 12 12"><path d="M1.5 1.5l9 9M10.5 1.5l-9 9" stroke="#c8c8c8" stroke-width="1.3"/></svg>
<svg class="a" style="left:171.00px;top:162.00px;" width="13" height="12" viewBox="0 0 13 12"><path d="M1 6.5l3.5 4 7.5-9" fill="none" stroke="#c8c8c8" stroke-width="1.3"/></svg>
<div class="a t" style="left:201.00px;width:20px;text-align:center;top:158.50px;line-height:21.00px;font-size:15px;color:#666;font-family:"Liberation Serif",serif"><i>f</i><i style="font-size:10px">x</i></div>
<div class="a" style="left:232.50px;top:157.00px;width:1203.50px;height:23.00px;background:#fff;border:1px solid #dadada;box-sizing:border-box"></div>
<svg class="a" style="left:1423.00px;top:165.00px;" width="9" height="6" viewBox="0 0 9 6"><path d="M1 1l3.5 3.5L8 1" fill="none" stroke="#555" stroke-width="1.3"/></svg>
<div class="a" style="left:28.30px;top:208.50px;width:1393.40px;height:514.50px;background:#fff"></div>
<div class="a" style="left:0.00px;top:190.00px;width:1424.00px;height:18.50px;background:#ebebeb"></div>
<div class="a" style="left:276.25px;top:190.00px;width:207.50px;height:18.50px;background:#d3d3d3"></div>
<div class="a" style="left:276.25px;top:206.50px;width:207.50px;height:2.00px;background:#2b7353"></div>
<div class="a" style="left:0.00px;top:208.00px;width:1424.00px;height:1.00px;background:#c6c6c6"></div>
<svg class="a" style="left:10.00px;top:194.00px;" width="16" height="14" viewBox="0 0 16 14"><path d="M15 1v12H2z" fill="#b8b8b8"/></svg>
<div class="a" style="left:49.90px;top:194.00px;width:1.00px;height:14.50px;background:#c8c8c8"></div>
<div class="a" style="left:69.10px;top:194.00px;width:1.00px;height:14.50px;background:#c8c8c8"></div>
<div class="a" style="left:87.80px;top:194.00px;width:1.00px;height:14.50px;background:#c8c8c8"></div>
<div class="a" style="left:105.75px;top:194.00px;width:1.00px;height:14.50px;background:#c8c8c8"></div>
<div class="a" style="left:124.90px;top:194.00px;width:1.00px;height:14.50px;background:#c8c8c8"></div>
<div class="a" style="left:143.70px;top:194.00px;width:1.00px;height:14.50px;background:#c8c8c8"></div>
<div class="a" style="left:162.80px;top:194.00px;width:1.00px;height:14.50px;background:#c8c8c8"></div>
<div class="a" style="left:180.75px;top:194.00px;width:1.00px;height:14.50px;background:#c8c8c8"></div>
<div class="a" style="left:199.90px;top:194.00px;width:1.00px;height:14.50px;background:#c8c8c8"></div>
<div class="a" style="left:219.10px;top:194.00px;width:1.00px;height:14.50px;background:#c8c8c8"></div>
<div class="a" style="left:237.80px;top:194.00px;width:1.00px;height:14.50px;background:#c8c8c8"></div>
<div class="a" style="left:256.20px;top:194.00px;width:1.00px;height:14.50px;background:#c8c8c8"></div>
<div class="a" style="left:275.75px;top:194.00px;width:1.00px;height:14.50px;background:#c8c8c8"></div>
<div class="a" style="left:294.50px;top:196.00px;width:1.00px;height:10.50px;background:#c4c4c4"></div>
<div class="a" style="left:314.00px;top:196.00px;width:1.00px;height:10.50px;background:#c4c4c4"></div>
<div class="a" style="left:333.25px;top:196.00px;width:1.00px;height:10.50px;background:#c4c4c4"></div>
<div class="a" style="left:351.90px;top:196.00px;width:1.00px;height:10.50px;background:#c4c4c4"></div>
<div class="a" style="left:370.60px;top:196.00px;width:1.00px;height:10.50px;background:#c4c4c4"></div>
<div class="a" style="left:389.30px;top:196.00px;width:1.00px;height:10.50px;background:#c4c4c4"></div>
<div class="a" style="left:408.00px;top:196.00px;width:1.00px;height:10.50px;background:#c4c4c4"></div>
<div class="a" style="left:426.70px;top:196.00px;width:1.00px;height:10.50px;background:#c4c4c4"></div>
<div class="a" style="left:445.30px;top:196.00px;width:1.00px;height:10.50px;background:#c4c4c4"></div>
<div class="a" style="left:464.30px;top:196.00px;width:1.00px;height:10.50px;background:#c4c4c4"></div>
<div class="a" style="left:483.25px;top:194.00px;width:1.00px;height:14.50px;background:#c8c8c8"></div>
<div class="a" style="left:502.00px;top:194.00px;width:1.00px;height:14.50px;background:#c8c8c8"></div>
<div class="a" style="left:520.75px;top:194.00px;width:1.00px;height:14.50px;background:#c8c8c8"></div>
<div class="a" style="left:539.90px;top:194.00px;width:1.00px;height:14.50px;background:#c8c8c8"></div>
<div class="a" style="left:558.25px;top:194.00px;width:1.00px;height:14.50px;background:#c8c8c8"></div>
<div class="a" style="left:577.00px;top:194.00px;width:1.00px;height:14.50px;background:#c8c8c8"></div>
<div class="a" style="left:595.75px;top:194.00px;width:1.00px;height:14.50px;background:#c8c8c8"></div>
<div class="a" style="left:614.90px;top:194.00px;width:1.00px;height:14.50px;background:#c8c8c8"></div>
<div class="a" style="left:633.70px;top:194.00px;width:1.00px;height:14.50px;background:#c8c8c8"></div>
<div class="a" style="left:652.40px;top:194.00px;width:1.00px;height:14.50px;background:#c8c8c8"></div>
<div class="a" style="left:670.75px;top:194.00px;width:1.00px;height:14.50px;background:#c8c8c8"></div>
<div class="a" style="left:689.90px;top:194.00px;width:1.00px;height:14.50px;background:#c8c8c8"></div>
<div class="a" style="left:709.90px;top:194.00px;width:1.00px;height:14.50px;background:#c8c8c8"></div>
<div class="a" style="left:276.25px;top:206.50px;width:207.50px;height:2.00px;background:#2b7353"></div>
<div class="a" style="left:742.00px;top:194.00px;width:1.00px;height:14.50px;background:#c8c8c8"></div>
<div class="a" style="left:774.10px;top:194.00px;width:1.00px;height:14.50px;background:#c8c8c8"></div>
<div class="a" style="left:1089.80px;top:194.00px;width:1.00px;height:14.50px;background:#c8c8c8"></div>
<div class="a" style="left:1093.30px;top:194.00px;width:1.00px;height:14.50px;background:#c8c8c8"></div>
<div class="a" style="left:1180.50px;top:194.00px;width:1.00px;height:14.50px;background:#c8c8c8"></div>
<div class="a" style="left:1270.50px;top:194.00px;width:1.00px;height:14.50px;background:#c8c8c8"></div>
<div class="a" style="left:1360.50px;top:194.00px;width:1.00px;height:14.50px;background:#c8c8c8"></div>
<div class="a" style="left:27.80px;top:194.00px;width:1.00px;height:14.50px;background:#c8c8c8"></div>
<div class="a t" style="left:19.35px;width:40px;text-align:center;top:191.70px;line-height:18.20px;font-size:13px;color:#484848;">A</div>
<div class="a t" style="left:40.00px;width:40px;text-align:center;top:191.70px;line-height:18.20px;font-size:13px;color:#484848;">B</div>
<div class="a t" style="left:58.95px;width:40px;text-align:center;top:191.70px;line-height:18.20px;font-size:13px;color:#484848;">C</div>
<div class="a t" style="left:77.28px;width:40px;text-align:center;top:191.70px;line-height:18.20px;font-size:13px;color:#484848;">D</div>
<div class="a t" style="left:95.83px;width:40px;text-align:center;top:191.70px;line-height:18.20px;font-size:13px;color:#484848;">E</div>
<div class="a t" style="left:114.80px;width:40px;text-align:center;top:191.70px;line-height:18.20px;font-size:13px;color:#484848;">F</div>
<div class="a t" style="left:133.75px;width:40px;text-align:center;top:191.70px;line-height:18.20px;font-size:13px;color:#484848;">G</div>
<div class="a t" style="left:152.28px;width:40px;text-align:center;top:191.70px;line-height:18.20px;font-size:13px;color:#484848;">H</div>
<div class="a t" style="left:170.82px;width:40px;text-align:center;top:191.70px;line-height:18.20px;font-size:13px;color:#484848;">I</div>
<div class="a t" style="left:190.00px;width:40px;text-align:center;top:191.70px;line-height:18.20px;font-size:13px;color:#484848;">J</div>
<div class="a t" style="left:208.95px;width:40px;text-align:center;top:191.70px;line-height:18.20px;font-size:13px;color:#484848;">K</div>
<div class="a t" style="left:227.50px;width:40px;text-align:center;top:191.70px;line-height:18.20px;font-size:13px;color:#484848;">L</div>
<div class="a t" style="left:246.48px;width:40px;text-align:center;top:191.70px;line-height:18.20px;font-size:13px;color:#484848;">M</div>
<div class="a t" style="left:265.62px;width:40px;text-align:center;top:191.70px;line-height:18.20px;font-size:13px;color:#4d6a5c;">N</div>
<div class="a t" style="left:284.75px;width:40px;text-align:center;top:191.70px;line-height:18.20px;font-size:13px;color:#4d6a5c;">O</div>
<div class="a t" style="left:304.12px;width:40px;text-align:center;top:191.70px;line-height:18.20px;font-size:13px;color:#4d6a5c;">P</div>
<div class="a t" style="left:323.07px;width:40px;text-align:center;top:191.70px;line-height:18.20px;font-size:13px;color:#4d6a5c;">Q</div>
<div class="a t" style="left:341.75px;width:40px;text-align:center;top:191.70px;line-height:18.20px;font-size:13px;color:#4d6a5c;">R</div>
<div class="a t" style="left:360.45px;width:40px;text-align:center;top:191.70px;line-height:18.20px;font-size:13px;color:#4d6a5c;">S</div>
<div class="a t" style="left:379.15px;width:40px;text-align:center;top:191.70px;line-height:18.20px;font-size:13px;color:#4d6a5c;">T</div>
<div class="a t" style="left:397.85px;width:40px;text-align:center;top:191.70px;line-height:18.20px;font-size:13px;color:#4d6a5c;">U</div>
<div class="a t" style="left:416.50px;width:40px;text-align:center;top:191.70px;line-height:18.20px;font-size:13px;color:#4d6a5c;">V</div>
<div class="a t" style="left:435.30px;width:40px;text-align:center;top:191.70px;line-height:18.20px;font-size:13px;color:#4d6a5c;">W</div>
<div class="a t" style="left:454.27px;width:40px;text-align:center;top:191.70px;line-height:18.20px;font-size:13px;color:#4d6a5c;">X</div>
<div class="a t" style="left:473.12px;width:40px;text-align:center;top:191.70px;line-height:18.20px;font-size:13px;color:#484848;">Y</div>
<div class="a t" style="left:491.88px;width:40px;text-align:center;top:191.70px;line-height:18.20px;font-size:13px;color:#484848;">Z</div>
<div class="a t" style="left:510.83px;width:40px;text-align:center;top:191.70px;line-height:18.20px;font-size:13px;color:#484848;">AA</div>
<div class="a t" style="left:529.58px;width:40px;text-align:center;top:191.70px;line-height:18.20px;font-size:13px;color:#484848;">AB</div>
<div class="a t" style="left:548.12px;width:40px;text-align:center;top:191.70px;line-height:18.20px;font-size:13px;color:#484848;">AC</div>
<div class="a t" style="left:566.88px;width:40px;text-align:center;top:191.70px;line-height:18.20px;font-size:13px;color:#484848;">AD</div>
<div class="a t" style="left:585.83px;width:40px;text-align:center;top:191.70px;line-height:18.20px;font-size:13px;color:#484848;">AE</div>
<div class="a t" style="left:604.80px;width:40px;text-align:center;top:191.70px;line-height:18.20px;font-size:13px;color:#484848;">AF</div>
<div class="a t" style="left:623.55px;width:40px;text-align:center;top:191.70px;line-height:18.20px;font-size:13px;color:#484848;">AG</div>
<div class="a t" style="left:642.08px;width:40px;text-align:center;top:191.70px;line-height:18.20px;font-size:13px;color:#484848;">AH</div>
<div class="a t" style="left:660.83px;width:40px;text-align:center;top:191.70px;line-height:18.20px;font-size:13px;color:#484848;">AI</div>
<div class="a t" style="left:680.40px;width:40px;text-align:center;top:191.70px;line-height:18.20px;font-size:13px;color:#484848;">AJ</div>
<div class="a t" style="left:696.45px;width:60px;text-align:center;top:191.70px;line-height:18.20px;font-size:13px;color:#484848;">AK</div>
<div class="a t" style="left:728.55px;width:60px;text-align:center;top:191.70px;line-height:18.20px;font-size:13px;color:#484848;">AL</div>
<div class="a t" style="left:902.05px;width:60px;text-align:center;top:191.70px;line-height:18.20px;font-size:13px;color:#484848;">AM</div>
<div class="a t" style="left:1107.25px;width:60px;text-align:center;top:191.70px;line-height:18.20px;font-size:13px;color:#484848;">AQ</div>
<div class="a t" style="left:1196.00px;width:60px;text-align:center;top:191.70px;line-height:18.20px;font-size:13px;color:#484848;">AR</div>
<div class="a t" style="left:1286.00px;width:60px;text-align:center;top:191.70px;line-height:18.20px;font-size:13px;color:#484848;">AS</div>
<div class="a t" style="left:1358.00px;width:60px;text-align:right;top:191.70px;line-height:18.20px;font-size:13px;color:#484848;">AT</div>
<div class="a" style="left:0.00px;top:208.50px;width:28.30px;height:514.50px;background:#ebebeb"></div>
<div class="a" style="left:0.00px;top:444.75px;width:28.30px;height:22.50px;background:#d3d3d3"></div>
<div class="a" style="left:27.80px;top:208.50px;width:1.00px;height:514.50px;background:#bdbdbd"></div>
<div class="a" style="left:26.30px;top:444.75px;width:2.00px;height:22.50px;background:#2b7353"></div>
<div class="a" style="left:0.00px;top:241.75px;width:27.80px;height:1.00px;background:#cfcfcf"></div>
<div class="a" style="left:0.00px;top:264.25px;width:27.80px;height:1.00px;background:#cfcfcf"></div>
<div class="a" style="left:0.00px;top:286.75px;width:27.80px;height:1.00px;background:#cfcfcf"></div>
<div class="a" style="left:0.00px;top:309.25px;width:27.80px;height:1.00px;background:#cfcfcf"></div>
<div class="a" style="left:0.00px;top:331.75px;width:27.80px;height:1.00px;background:#cfcfcf"></div>
<div class="a" style="left:0.00px;top:354.25px;width:27.80px;height:1.00px;background:#cfcfcf"></div>
<div class="a" style="left:0.00px;top:376.75px;width:27.80px;height:1.00px;background:#cfcfcf"></div>
<div class="a" style="left:0.00px;top:399.25px;width:27.80px;height:1.00px;background:#cfcfcf"></div>
<div class="a" style="left:0.00px;top:421.75px;width:27.80px;height:1.00px;background:#cfcfcf"></div>
<div class="a" style="left:0.00px;top:444.25px;width:27.80px;height:1.00px;background:#cfcfcf"></div>
<div class="a" style="left:0.00px;top:466.75px;width:27.80px;height:1.00px;background:#cfcfcf"></div>
<div class="a" style="left:0.00px;top:489.25px;width:27.80px;height:1.00px;background:#cfcfcf"></div>
<div class="a" style="left:0.00px;top:511.75px;width:27.80px;height:1.00px;background:#cfcfcf"></div>
<div class="a" style="left:0.00px;top:575.75px;width:27.80px;height:1.00px;background:#cfcfcf"></div>
<div class="a" style="left:0.00px;top:601.75px;width:27.80px;height:1.00px;background:#cfcfcf"></div>
<div class="a" style="left:0.00px;top:624.35px;width:27.80px;height:1.00px;background:#cfcfcf"></div>
<div class="a" style="left:0.00px;top:646.95px;width:27.80px;height:1.00px;background:#cfcfcf"></div>
<div class="a" style="left:0.00px;top:669.55px;width:27.80px;height:1.00px;background:#cfcfcf"></div>
<div class="a" style="left:0.00px;top:692.15px;width:27.80px;height:1.00px;background:#cfcfcf"></div>
<div class="a" style="left:0.00px;top:714.75px;width:27.80px;height:1.00px;background:#cfcfcf"></div>
<div class="a t" style="left:0.50px;width:28px;text-align:center;top:224.85px;line-height:19.60px;font-size:14px;color:#444;">1</div>
<div class="a t" style="left:0.50px;width:28px;text-align:center;top:247.35px;line-height:19.60px;font-size:14px;color:#444;">2</div>
<div class="a t" style="left:0.50px;width:28px;text-align:center;top:269.85px;line-height:19.60px;font-size:14px;color:#444;">3</div>
<div class="a t" style="left:0.50px;width:28px;text-align:center;top:292.35px;line-height:19.60px;font-size:14px;color:#444;">4</div>
<div class="a t" style="left:0.50px;width:28px;text-align:center;top:314.85px;line-height:19.60px;font-size:14px;color:#444;">5</div>
<div class="a t" style="left:0.50px;width:28px;text-align:center;top:337.35px;line-height:19.60px;font-size:14px;color:#444;">6</div>
<div class="a t" style="left:0.50px;width:28px;text-align:center;top:359.85px;line-height:19.60px;font-size:14px;color:#444;">7</div>
<div class="a t" style="left:0.50px;width:28px;text-align:center;top:382.35px;line-height:19.60px;font-size:14px;color:#444;">8</div>
<div class="a t" style="left:0.50px;width:28px;text-align:center;top:404.85px;line-height:19.60px;font-size:14px;color:#444;">9</div>
<div class="a t" style="left:0.50px;width:28px;text-align:center;top:427.35px;line-height:19.60px;font-size:14px;color:#444;">10</div>
<div class="a t" style="left:0.50px;width:28px;text-align:center;top:449.85px;line-height:19.60px;font-size:14px;color:#3d6652;">11</div>
<div class="a t" style="left:0.50px;width:28px;text-align:center;top:472.35px;line-height:19.60px;font-size:14px;color:#444;">12</div>
<div class="a t" style="left:0.50px;width:28px;text-align:center;top:494.85px;line-height:19.60px;font-size:14px;color:#444;">13</div>
<div class="a t" style="left:0.50px;width:28px;text-align:center;top:558.85px;line-height:19.60px;font-size:14px;color:#444;">14</div>
<div class="a t" style="left:0.50px;width:28px;text-align:center;top:584.85px;line-height:19.60px;font-size:14px;color:#444;">15</div>
<div class="a t" style="left:0.50px;width:28px;text-align:center;top:607.45px;line-height:19.60px;font-size:14px;color:#444;">16</div>
<div class="a t" style="left:0.50px;width:28px;text-align:center;top:630.05px;line-height:19.60px;font-size:14px;color:#444;">17</div>
<div class="a t" style="left:0.50px;width:28px;text-align:center;top:652.65px;line-height:19.60px;font-size:14px;color:#444;">18</div>
<div class="a t" style="left:0.50px;width:28px;text-align:center;top:675.25px;line-height:19.60px;font-size:14px;color:#444;">19</div>
<div class="a t" style="left:0.50px;width:28px;text-align:center;top:697.85px;line-height:19.60px;font-size:14px;color:#444;">20</div>
<div class="a t" style="left:0.50px;width:28px;text-align:center;top:720.45px;line-height:19.60px;font-size:14px;color:#444;">21</div>
<div class="a" style="left:28.30px;top:242.25px;width:682.10px;height:22.50px;background:#eeeeee"></div>
<div class="a" style="left:28.30px;top:332.25px;width:682.10px;height:22.50px;background:#eeeeee"></div>
<div class="a" style="left:28.30px;top:422.25px;width:682.10px;height:22.50px;background:#eeeeee"></div>
<div class="a" style="left:28.30px;top:576.25px;width:682.10px;height:26.00px;background:#eeeeee"></div>
<div class="a" style="left:710.40px;top:241.75px;width:711.30px;height:1.00px;background:#dfdfdf"></div>
<div class="a" style="left:710.40px;top:264.25px;width:711.30px;height:1.00px;background:#dfdfdf"></div>
<div class="a" style="left:710.40px;top:286.75px;width:711.30px;height:1.00px;background:#dfdfdf"></div>
<div class="a" style="left:710.40px;top:309.25px;width:711.30px;height:1.00px;background:#dfdfdf"></div>
<div class="a" style="left:710.40px;top:331.75px;width:711.30px;height:1.00px;background:#dfdfdf"></div>
<div class="a" style="left:710.40px;top:354.25px;width:711.30px;height:1.00px;background:#dfdfdf"></div>
<div class="a" style="left:710.40px;top:376.75px;width:711.30px;height:1.00px;background:#dfdfdf"></div>
<div class="a" style="left:710.40px;top:399.25px;width:711.30px;height:1.00px;background:#dfdfdf"></div>
<div class="a" style="left:710.40px;top:421.75px;width:711.30px;height:1.00px;background:#dfdfdf"></div>
<div class="a" style="left:710.40px;top:444.25px;width:711.30px;height:1.00px;background:#dfdfdf"></div>
<div class="a" style="left:710.40px;top:466.75px;width:711.30px;height:1.00px;background:#dfdfdf"></div>
<div class="a" style="left:710.40px;top:489.25px;width:711.30px;height:1.00px;background:#dfdfdf"></div>
<div class="a" style="left:710.40px;top:511.75px;width:711.30px;height:1.00px;background:#dfdfdf"></div>
<div class="a" style="left:710.40px;top:575.75px;width:711.30px;height:1.00px;background:#dfdfdf"></div>
<div class="a" style="left:710.40px;top:601.75px;width:711.30px;height:1.00px;background:#dfdfdf"></div>
<div class="a" style="left:710.40px;top:624.35px;width:711.30px;height:1.00px;background:#dfdfdf"></div>
<div class="a" style="left:710.40px;top:646.95px;width:711.30px;height:1.00px;background:#dfdfdf"></div>
<div class="a" style="left:710.40px;top:669.55px;width:711.30px;height:1.00px;background:#dfdfdf"></div>
<div class="a" style="left:710.40px;top:692.15px;width:711.30px;height:1.00px;background:#dfdfdf"></div>
<div class="a" style="left:710.40px;top:714.75px;width:711.30px;height:1.00px;background:#dfdfdf"></div>
<div class="a" style="left:709.90px;top:208.50px;width:1.00px;height:514.50px;background:#dfdfdf"></div>
<div class="a" style="left:742.00px;top:208.50px;width:1.00px;height:514.50px;background:#dfdfdf"></div>
<div class="a" style="left:774.10px;top:208.50px;width:1.00px;height:514.50px;background:#dfdfdf"></div>
<div class="a" style="left:1091.50px;top:208.50px;width:1.00px;height:514.50px;background:#dfdfdf"></div>
<div class="a" style="left:1180.50px;top:208.50px;width:1.00px;height:514.50px;background:#dfdfdf"></div>
<div class="a" style="left:1270.50px;top:208.50px;width:1.00px;height:514.50px;background:#dfdfdf"></div>
<div class="a" style="left:1360.50px;top:208.50px;width:1.00px;height:514.50px;background:#dfdfdf"></div>
<div class="a" style="left:1421.20px;top:208.50px;width:1.00px;height:514.50px;background:#dfdfdf"></div>
<div class="a" style="left:49.90px;top:264.75px;width:1.00px;height:67.50px;background:#dfdfdf"></div>
<div class="a" style="left:256.20px;top:264.75px;width:1.00px;height:67.50px;background:#dfdfdf"></div>
<div class="a" style="left:275.75px;top:264.75px;width:1.00px;height:67.50px;background:#dfdfdf"></div>
<div class="a" style="left:483.25px;top:264.75px;width:1.00px;height:67.50px;background:#dfdfdf"></div>
<div class="a" style="left:502.00px;top:264.75px;width:1.00px;height:67.50px;background:#dfdfdf"></div>
<div class="a" style="left:50.40px;top:286.75px;width:206.30px;height:1.00px;background:#dfdfdf"></div>
<div class="a" style="left:256.70px;top:286.75px;width:227.05px;height:1.00px;background:#dfdfdf"></div>
<div class="a" style="left:483.75px;top:286.75px;width:226.65px;height:1.00px;background:#dfdfdf"></div>
<div class="a" style="left:50.40px;top:309.25px;width:206.30px;height:1.00px;background:#dfdfdf"></div>
<div class="a" style="left:256.70px;top:309.25px;width:227.05px;height:1.00px;background:#dfdfdf"></div>
<div class="a" style="left:483.75px;top:309.25px;width:226.65px;height:1.00px;background:#dfdfdf"></div>
<div class="a" style="left:49.90px;top:354.75px;width:1.00px;height:67.50px;background:#dfdfdf"></div>
<div class="a" style="left:256.20px;top:354.75px;width:1.00px;height:67.50px;background:#dfdfdf"></div>
<div class="a" style="left:483.25px;top:354.75px;width:1.00px;height:67.50px;background:#dfdfdf"></div>
<div class="a" style="left:502.00px;top:354.75px;width:1.00px;height:67.50px;background:#dfdfdf"></div>
<div class="a" style="left:50.40px;top:376.75px;width:206.30px;height:1.00px;background:#dfdfdf"></div>
<div class="a" style="left:483.75px;top:376.75px;width:226.65px;height:1.00px;background:#dfdfdf"></div>
<div class="a" style="left:50.40px;top:399.25px;width:206.30px;height:1.00px;background:#dfdfdf"></div>
<div class="a" style="left:483.75px;top:399.25px;width:226.65px;height:1.00px;background:#dfdfdf"></div>
<div class="a" style="left:49.90px;top:444.75px;width:1.00px;height:67.50px;background:#dfdfdf"></div>
<div class="a" style="left:256.20px;top:444.75px;width:1.00px;height:67.50px;background:#dfdfdf"></div>
<div class="a" style="left:275.75px;top:444.75px;width:1.00px;height:67.50px;background:#dfdfdf"></div>
<div class="a" style="left:483.25px;top:444.75px;width:1.00px;height:67.50px;background:#dfdfdf"></div>
<div class="a" style="left:502.00px;top:444.75px;width:1.00px;height:67.50px;background:#dfdfdf"></div>
<div class="a" style="left:50.40px;top:466.75px;width:206.30px;height:1.00px;background:#dfdfdf"></div>
<div class="a" style="left:256.70px;top:466.75px;width:227.05px;height:1.00px;background:#dfdfdf"></div>
<div class="a" style="left:483.75px;top:466.75px;width:226.65px;height:1.00px;background:#dfdfdf"></div>
<div class="a" style="left:50.40px;top:489.25px;width:206.30px;height:1.00px;background:#dfdfdf"></div>
<div class="a" style="left:256.70px;top:489.25px;width:227.05px;height:1.00px;background:#dfdfdf"></div>
<div class="a" style="left:483.75px;top:489.25px;width:226.65px;height:1.00px;background:#dfdfdf"></div>
<div class="a" style="left:50.40px;top:511.75px;width:660.00px;height:1.00px;background:#dfdfdf"></div>
<div class="a" style="left:28.30px;top:511.75px;width:682.10px;height:1.00px;background:#dfdfdf"></div>
<div class="a" style="left:49.90px;top:602.25px;width:1.00px;height:120.75px;background:#dfdfdf"></div>
<div class="a" style="left:256.20px;top:602.25px;width:1.00px;height:120.75px;background:#dfdfdf"></div>
<div class="a" style="left:275.75px;top:602.25px;width:1.00px;height:120.75px;background:#dfdfdf"></div>
<div class="a" style="left:483.25px;top:602.25px;width:1.00px;height:120.75px;background:#dfdfdf"></div>
<div class="a" style="left:502.00px;top:602.25px;width:1.00px;height:120.75px;background:#dfdfdf"></div>
<div class="a" style="left:28.30px;top:624.35px;width:682.10px;height:1.00px;background:#dfdfdf"></div>
<div class="a" style="left:28.30px;top:646.95px;width:682.10px;height:1.00px;background:#dfdfdf"></div>
<div class="a" style="left:28.30px;top:669.55px;width:682.10px;height:1.00px;background:#dfdfdf"></div>
<div class="a" style="left:28.30px;top:692.15px;width:682.10px;height:1.00px;background:#dfdfdf"></div>
<div class="a" style="left:28.30px;top:714.75px;width:682.10px;height:1.00px;background:#dfdfdf"></div>
<div class="a" style="left:28.30px;top:737.35px;width:682.10px;height:1.00px;background:#dfdfdf"></div>
<div class="a t" style="left:219.35px;width:300px;text-align:center;top:214.55px;line-height:21.70px;font-size:15.5px;color:#111;font-weight:bold;">2025年目标&amp;复盘</div>
<div class="a t" style="left:42.50px;width:200px;text-align:center;top:245.61px;line-height:17.78px;font-size:12.7px;color:#3030c4;font-weight:bold;">学习成长</div>
<div class="a t" style="left:270.23px;width:200px;text-align:center;top:245.61px;line-height:17.78px;font-size:12.7px;color:#3030c4;font-weight:bold;">体验突破</div>
<div class="a t" style="left:497.08px;width:200px;text-align:center;top:245.61px;line-height:17.78px;font-size:12.7px;color:#3030c4;font-weight:bold;">休闲娱乐</div>
<div class="a t" style="left:42.50px;width:200px;text-align:center;top:335.61px;line-height:17.78px;font-size:12.7px;color:#3030c4;font-weight:bold;">工作事业</div>
<div class="a t" style="left:270.23px;width:200px;text-align:center;top:335.61px;line-height:17.78px;font-size:12.7px;color:#3030c4;font-weight:bold;">聪聪-2025年目标</div>
<div class="a t" style="left:497.08px;width:200px;text-align:center;top:335.61px;line-height:17.78px;font-size:12.7px;color:#3030c4;font-weight:bold;">家庭生活</div>
<div class="a t" style="left:42.50px;width:200px;text-align:center;top:425.61px;line-height:17.78px;font-size:12.7px;color:#3030c4;font-weight:bold;">身体健康</div>
<div class="a t" style="left:270.23px;width:200px;text-align:center;top:425.61px;line-height:17.78px;font-size:12.7px;color:#3030c4;font-weight:bold;">理财财务</div>
<div class="a t" style="left:497.08px;width:200px;text-align:center;top:425.61px;line-height:17.78px;font-size:12.7px;color:#3030c4;font-weight:bold;">人际社群</div>
<div class="a t" style="left:219.35px;width:300px;text-align:center;top:581.36px;line-height:17.78px;font-size:12.7px;color:#3030c4;font-weight:bold;">2025完成事件复盘汇总</div>
<div class="a t" style="left:53.40px;top:268.20px;line-height:16.80px;font-size:12px;color:#222;letter-spacing:-0.5px">读书24本（复盘100个人物）</div>
<div class="a t" style="left:53.40px;top:290.70px;line-height:16.80px;font-size:12px;color:#222;letter-spacing:-0.5px">复盘100讲，个人品牌100讲</div>
<div class="a t" style="left:53.40px;top:313.20px;line-height:16.80px;font-size:12px;color:#222;letter-spacing:-0.5px">成长会12讲，过钱关</div>
<div class="a t" style="left:53.40px;top:358.20px;line-height:16.80px;font-size:12px;color:#222;letter-spacing:-0.5px">IP创富私教交付</div>
<div class="a t" style="left:53.40px;top:380.70px;line-height:16.80px;font-size:12px;color:#222;letter-spacing:-0.5px">复盘家族课程升级</div>
<div class="a t" style="left:53.40px;top:403.20px;line-height:16.80px;font-size:12px;color:#222;letter-spacing:-0.5px">复盘俱乐部交付</div>
<div class="a t" style="left:53.40px;top:448.20px;line-height:16.80px;font-size:12px;color:#222;letter-spacing:-0.5px">七点早起200天</div>
<div class="a t" style="left:53.40px;top:470.70px;line-height:16.80px;font-size:12px;color:#222;letter-spacing:-0.5px">抄心经365天</div>
<div class="a t" style="left:53.40px;top:493.20px;line-height:16.80px;font-size:12px;color:#222;letter-spacing:-0.5px">写日记365天</div>
<svg class="a" style="left:280.75px;top:270.00px;" width="12" height="12" viewBox="0 0 12 12"><path d="M1 6C1 3 2 1 3.8 1 4.8 1 5.5 1.6 6 2.2 6.5 1.6 7.2 1 8.2 1 10 1 11 3 11 6 11 9 9 10.6 6 10.6 3 10.6 1 9 1 6z" fill="#eaf0cc" stroke="#7b9630" stroke-width="1.4"/><circle cx="3.9" cy="3.2" r="0.9" fill="#5a7020"/><circle cx="8.1" cy="3.2" r="0.9" fill="#5a7020"/><path d="M3 8L6 5.8 9 8" fill="none" stroke="#7b9630" stroke-width="1.1"/></svg>
<div class="a t" style="left:295.75px;top:267.90px;line-height:16.80px;font-size:12px;color:#111;font-weight:bold;letter-spacing:-0.5px">本事：小红书200篇</div>
<svg class="a" style="left:280.75px;top:292.50px;" width="12" height="12" viewBox="0 0 12 12"><path d="M1 6C1 3 2 1 3.8 1 4.8 1 5.5 1.6 6 2.2 6.5 1.6 7.2 1 8.2 1 10 1 11 3 11 6 11 9 9 10.6 6 10.6 3 10.6 1 9 1 6z" fill="#eaf0cc" stroke="#7b9630" stroke-width="1.4"/><circle cx="3.9" cy="3.2" r="0.9" fill="#5a7020"/><circle cx="8.1" cy="3.2" r="0.9" fill="#5a7020"/><path d="M3 8L6 5.8 9 8" fill="none" stroke="#7b9630" stroke-width="1.1"/></svg>
<div class="a t" style="left:295.75px;top:290.40px;line-height:16.80px;font-size:12px;color:#111;font-weight:bold;letter-spacing:-0.5px">本事：公众号200篇</div>
<svg class="a" style="left:280.75px;top:315.00px;" width="12" height="12" viewBox="0 0 12 12"><path d="M1 6C1 3 2 1 3.8 1 4.8 1 5.5 1.6 6 2.2 6.5 1.6 7.2 1 8.2 1 10 1 11 3 11 6 11 9 9 10.6 6 10.6 3 10.6 1 9 1 6z" fill="#eaf0cc" stroke="#7b9630" stroke-width="1.4"/><circle cx="3.9" cy="3.2" r="0.9" fill="#5a7020"/><circle cx="8.1" cy="3.2" r="0.9" fill="#5a7020"/><path d="M3 8L6 5.8 9 8" fill="none" stroke="#7b9630" stroke-width="1.1"/></svg>
<div class="a t" style="left:295.75px;top:312.90px;line-height:16.80px;font-size:12px;color:#111;font-weight:bold;letter-spacing:-0.5px">写一个知识付费课</div>
<div class="a t" style="left:279.25px;top:493.20px;line-height:16.80px;font-size:12px;color:#222;letter-spacing:-0.5px">记账：预算10万，财务复盘</div>
<div class="a t" style="left:270.23px;width:200px;text-align:center;top:379.40px;line-height:18.20px;font-size:13px;color:#222;">赚钱，交付，产出</div>
<div class="a t" style="left:506.00px;top:268.20px;line-height:16.80px;font-size:12px;color:#222;letter-spacing:-0.5px">纪录片</div>
<div class="a t" style="left:506.00px;top:290.70px;line-height:16.80px;font-size:12px;color:#222;letter-spacing:-0.5px">生命电影</div>
<div class="a t" style="left:506.00px;top:358.20px;line-height:16.80px;font-size:12px;color:#222;letter-spacing:-0.5px">家庭关系和谐</div>
<div class="a t" style="left:506.00px;top:380.70px;line-height:16.80px;font-size:12px;color:#222;letter-spacing:-0.5px">带儿子暑假</div>
<div class="a t" style="left:506.00px;top:448.20px;line-height:16.80px;font-size:12px;color:#222;letter-spacing:-0.5px">成长会</div>
<div class="a t" style="left:506.00px;top:470.70px;line-height:16.80px;font-size:12px;color:#222;letter-spacing:-0.5px">粥左罗</div>
<div class="a t" style="left:506.00px;top:493.20px;line-height:16.80px;font-size:12px;color:#222;letter-spacing:-0.5px">必经之路天空营</div>
<div class="a t" style="left:31.80px;top:515.00px;line-height:17.50px;font-size:12.5px;color:#111;font-weight:bold;">2025主题：如果生活像一部电影，你的2025年叫什么名字?</div>
<div class="a t" style="left:24.35px;width:30px;text-align:center;top:605.50px;line-height:16.10px;font-size:11.5px;color:#222;">1</div>
<div class="a t" style="left:251.48px;width:30px;text-align:center;top:605.50px;line-height:16.10px;font-size:11.5px;color:#222;">8</div>
<div class="a t" style="left:478.12px;width:30px;text-align:center;top:605.50px;line-height:16.10px;font-size:11.5px;color:#222;">15</div>
<div class="a t" style="left:24.35px;width:30px;text-align:center;top:628.10px;line-height:16.10px;font-size:11.5px;color:#222;">2</div>
<div class="a t" style="left:251.48px;width:30px;text-align:center;top:628.10px;line-height:16.10px;font-size:11.5px;color:#222;">9</div>
<div class="a t" style="left:478.12px;width:30px;text-align:center;top:628.10px;line-height:16.10px;font-size:11.5px;color:#222;">16</div>
<div class="a t" style="left:24.35px;width:30px;text-align:center;top:650.70px;line-height:16.10px;font-size:11.5px;color:#222;">3</div>
<div class="a t" style="left:251.48px;width:30px;text-align:center;top:650.70px;line-height:16.10px;font-size:11.5px;color:#222;">10</div>
<div class="a t" style="left:478.12px;width:30px;text-align:center;top:650.70px;line-height:16.10px;font-size:11.5px;color:#222;">17</div>
<div class="a t" style="left:24.35px;width:30px;text-align:center;top:673.30px;line-height:16.10px;font-size:11.5px;color:#222;">4</div>
<div class="a t" style="left:251.48px;width:30px;text-align:center;top:673.30px;line-height:16.10px;font-size:11.5px;color:#222;">11</div>
<div class="a t" style="left:478.12px;width:30px;text-align:center;top:673.30px;line-height:16.10px;font-size:11.5px;color:#222;">18</div>
<div class="a t" style="left:24.35px;width:30px;text-align:center;top:695.90px;line-height:16.10px;font-size:11.5px;color:#222;">5</div>
<div class="a t" style="left:251.48px;width:30px;text-align:center;top:695.90px;line-height:16.10px;font-size:11.5px;color:#222;">12</div>
<div class="a t" style="left:478.12px;width:30px;text-align:center;top:695.90px;line-height:16.10px;font-size:11.5px;color:#222;">19</div>
<div class="a t" style="left:24.35px;width:30px;text-align:center;top:718.50px;line-height:16.10px;font-size:11.5px;color:#222;">6</div>
<div class="a t" style="left:251.48px;width:30px;text-align:center;top:718.50px;line-height:16.10px;font-size:11.5px;color:#222;">13</div>
<div class="a t" style="left:478.12px;width:30px;text-align:center;top:718.50px;line-height:16.10px;font-size:11.5px;color:#222;">20</div>
<div class="a t" style="left:777.60px;top:217.91px;line-height:17.92px;font-size:12.8px;color:#111;font-weight:bold;">2025年10大核心目标</div>
<div class="a t" style="left:743.55px;width:30px;text-align:center;top:245.35px;line-height:17.50px;font-size:12.5px;color:#222;">1</div>
<div class="a t" style="left:743.55px;width:30px;text-align:center;top:267.85px;line-height:17.50px;font-size:12.5px;color:#222;">2</div>
<div class="a t" style="left:743.55px;width:30px;text-align:center;top:290.35px;line-height:17.50px;font-size:12.5px;color:#222;">3</div>
<div class="a t" style="left:743.55px;width:30px;text-align:center;top:312.85px;line-height:17.50px;font-size:12.5px;color:#222;">4</div>
<div class="a t" style="left:743.55px;width:30px;text-align:center;top:335.35px;line-height:17.50px;font-size:12.5px;color:#222;">5</div>
<div class="a t" style="left:743.55px;width:30px;text-align:center;top:357.85px;line-height:17.50px;font-size:12.5px;color:#222;">6</div>
<div class="a t" style="left:743.55px;width:30px;text-align:center;top:380.35px;line-height:17.50px;font-size:12.5px;color:#222;">7</div>
<div class="a t" style="left:743.55px;width:30px;text-align:center;top:402.85px;line-height:17.50px;font-size:12.5px;color:#222;">8</div>
<svg class="a" style="left:778.60px;top:270.50px;" width="12" height="12" viewBox="0 0 12 12"><path d="M1 6C1 3 2 1 3.8 1 4.8 1 5.5 1.6 6 2.2 6.5 1.6 7.2 1 8.2 1 10 1 11 3 11 6 11 9 9 10.6 6 10.6 3 10.6 1 9 1 6z" fill="#fff" stroke="#444" stroke-width="1.1"/><circle cx="3.9" cy="3.2" r="0.9" fill="#333"/><circle cx="8.1" cy="3.2" r="0.9" fill="#333"/><path d="M3 8L6 5.8 9 8" fill="none" stroke="#444" stroke-width="1.1"/></svg>
<div class="a t" style="left:792.60px;top:268.60px;width:296.40px;overflow:hidden;line-height:16px;font-size:12px;color:#222;letter-spacing:-0.5px">练本事：小红书200篇，公众号200篇（复盘100个人物）</div>
<svg class="a" style="left:778.60px;top:293.00px;" width="12" height="12" viewBox="0 0 12 12"><path d="M1 6C1 3 2 1 3.8 1 4.8 1 5.5 1.6 6 2.2 6.5 1.6 7.2 1 8.2 1 10 1 11 3 11 6 11 9 9 10.6 6 10.6 3 10.6 1 9 1 6z" fill="#fff" stroke="#444" stroke-width="1.1"/><circle cx="3.9" cy="3.2" r="0.9" fill="#333"/><circle cx="8.1" cy="3.2" r="0.9" fill="#333"/><path d="M3 8L6 5.8 9 8" fill="none" stroke="#444" stroke-width="1.1"/></svg>
<div class="a t" style="left:792.60px;top:291.10px;width:296.40px;overflow:hidden;line-height:16px;font-size:12px;color:#222;letter-spacing:-0.5px">成功案例：复盘家族10人+IP3人），公众号专栏+直播访谈</div>
<svg class="a" style="left:778.60px;top:315.50px;" width="12" height="12" viewBox="0 0 12 12"><path d="M1 6C1 3 2 1 3.8 1 4.8 1 5.5 1.6 6 2.2 6.5 1.6 7.2 1 8.2 1 10 1 11 3 11 6 11 9 9 10.6 6 10.6 3 10.6 1 9 1 6z" fill="#fff" stroke="#444" stroke-width="1.1"/><circle cx="3.9" cy="3.2" r="0.9" fill="#333"/><circle cx="8.1" cy="3.2" r="0.9" fill="#333"/><path d="M3 8L6 5.8 9 8" fill="none" stroke="#444" stroke-width="1.1"/></svg>
<div class="a t" style="left:792.60px;top:313.60px;width:296.40px;overflow:hidden;line-height:16px;font-size:12px;color:#222;letter-spacing:-0.5px">知识付费课=复盘创富30讲卖99元，视频号+公众号+小宇宙</div>
<div class="a t" style="left:777.60px;top:335.70px;line-height:16.80px;font-size:12px;color:#222;letter-spacing:-0.5px">复盘100讲+个人品牌100讲，电子版和印刷验货</div>
<div class="a t" style="left:777.60px;top:358.20px;line-height:16.80px;font-size:12px;color:#222;letter-spacing:-0.5px">读书24本（读复盘100个人物书籍）</div>
<div class="a t" style="left:777.60px;top:380.70px;line-height:16.80px;font-size:12px;color:#222;letter-spacing:-0.5px">习惯：日记365天/抄心经365天/七点早起200天/散步100天</div>
<div class="a t" style="left:777.60px;top:403.20px;line-height:16.80px;font-size:12px;color:#222;letter-spacing:-0.5px">学习社群：成长会，粥左罗，读书（经典），必经之路天空营</div>
<div class="a" style="left:1084.00px;top:265.25px;width:6.00px;height:6.00px;background:linear-gradient(45deg,transparent 50%,#d0243c 50%)"></div>
<div class="a t" style="left:777.60px;top:526.91px;line-height:17.78px;font-size:12.7px;color:#222;letter-spacing:-0.25px">好好工作，快乐生活，用心复盘，让生命有迹可循</div>
<div class="a t" style="left:777.60px;top:545.11px;line-height:17.78px;font-size:12.7px;color:#222;letter-spacing:-0.25px">成功既是爱，爱是一切原动力，祝福所有学员心想事成</div>
<div class="a t" style="left:777.60px;top:628.55px;line-height:16.80px;font-size:12px;color:#222;letter-spacing:-0.5px">直播156场，一周3场</div>
<div class="a" style="left:275.25px;top:443.75px;width:209.00px;height:24.00px;border:2px solid #2b6e55;box-sizing:border-box"></div>
<div class="a" style="left:481.25px;top:464.75px;width:5.00px;height:5.00px;background:#2b6e55;border:1px solid #fff;box-sizing:content-box"></div>
<svg class="a" style="left:312.00px;top:449.00px;" width="13" height="13" viewBox="0 0 13 13"><path d="M4.5 1h4v3.5H12v4H8.5V12h-4V8.5H1v-4h3.5z" fill="#fff" stroke="#111" stroke-width="1.2"/></svg>
<div class="a" style="left:1421.70px;top:190.00px;width:18.30px;height:533.00px;background:#f1eef1"></div>
<div class="a" style="left:1424.70px;top:191.40px;width:13.80px;height:14.00px;background:#fff;border:1px solid #bdbdbd;box-sizing:border-box"></div>
<svg class="a" style="left:1427.50px;top:195.00px;" width="9" height="6" viewBox="0 0 9 6"><path d="M0 5.5h8.5L4.25 0.5z" fill="#222"/></svg>
<div class="a" style="left:1424.70px;top:205.20px;width:13.80px;height:62.00px;background:#fff;border:1px solid #bdbdbd;box-sizing:border-box"></div>
<div class="a" style="left:1424.70px;top:709.00px;width:13.80px;height:14.00px;background:#fff;border:1px solid #bdbdbd;box-sizing:border-box"></div>
<svg class="a" style="left:1427.50px;top:713.50px;" width="9" height="6" viewBox="0 0 9 6"><path d="M0 0.5h8.5L4.25 5.5z" fill="#222"/></svg>
<div class="a" style="left:1421.20px;top:208.50px;width:1.00px;height:514.50px;background:#b4b4b4"></div>
<div class="a" style="left:0.00px;top:723.00px;width:1440.00px;height:21.30px;background:#e9e9e9"></div>
<div class="a" style="left:0.00px;top:723.00px;width:1424.00px;height:1.00px;background:#b8b8b8"></div>
<svg class="a" style="left:19.00px;top:730.00px;" width="6" height="8" viewBox="0 0 6 8"><path d="M5 0.5v7L0.5 4z" fill="#d6d6d6"/></svg>
<svg class="a" style="left:41.50px;top:730.00px;" width="6" height="8" viewBox="0 0 6 8"><path d="M1 0.5v7L5.5 4z" fill="#1e6e4a"/></svg>
<div class="a" style="left:78.50px;top:724.60px;width:96.00px;height:17.60px;background:#4a74c8;border:1px solid #c2d2f0;box-sizing:border-box"></div>
<div class="a t" style="left:78.00px;width:97px;text-align:center;top:722.40px;line-height:18.20px;font-size:13px;color:#fff;">2024目标复盘</div>
<div class="a" style="left:175.00px;top:723.00px;width:100.00px;height:20.00px;background:linear-gradient(#fff 0%,#eef4f8 60%,#cfdde6 100%);border:1px solid #c9d3d9;border-top:none;box-sizing:border-box"></div>
<div class="a" style="left:176.00px;top:741.00px;width:99.00px;height:2.00px;background:#2e5e4c"></div>
<div class="a t" style="left:175.00px;width:100px;text-align:center;top:721.90px;line-height:18.20px;font-size:13px;color:#456262;">2025目标复盘</div>
<div class="a" style="left:277.00px;top:724.80px;width:35.00px;height:17.50px;background:#10a45a;border:1px solid #9ee3bd;box-sizing:border-box"></div>
<div class="a t" style="left:264.50px;width:60px;text-align:center;top:722.89px;line-height:17.22px;font-size:12.3px;color:#0b2a16;">1月</div>
<div class="a" style="left:315.00px;top:724.80px;width:34.50px;height:17.50px;background:#10a45a;border:1px solid #9ee3bd;box-sizing:border-box"></div>
<div class="a t" style="left:302.25px;width:60px;text-align:center;top:722.89px;line-height:17.22px;font-size:12.3px;color:#0b2a16;">2月</div>
<div class="a" style="left:353.00px;top:724.80px;width:35.00px;height:17.50px;background:#10a45a;border:1px solid #9ee3bd;box-sizing:border-box"></div>
<div class="a t" style="left:340.50px;width:60px;text-align:center;top:722.89px;line-height:17.22px;font-size:12.3px;color:#0b2a16;">3月</div>
<div class="a" style="left:391.00px;top:724.80px;width:35.00px;height:17.50px;background:#10a45a;border:1px solid #9ee3bd;box-sizing:border-box"></div>
<div class="a t" style="left:378.50px;width:60px;text-align:center;top:722.89px;line-height:17.22px;font-size:12.3px;color:#0b2a16;">4月</div>
<div class="a" style="left:429.50px;top:724.80px;width:35.50px;height:17.50px;background:#10a45a;border:1px solid #9ee3bd;box-sizing:border-box"></div>
<div class="a t" style="left:417.25px;width:60px;text-align:center;top:722.89px;line-height:17.22px;font-size:12.3px;color:#0b2a16;">5月</div>
<div class="a" style="left:468.50px;top:724.80px;width:35.25px;height:17.50px;background:#10a45a;border:1px solid #9ee3bd;box-sizing:border-box"></div>
<div class="a t" style="left:456.12px;width:60px;text-align:center;top:722.89px;line-height:17.22px;font-size:12.3px;color:#0b2a16;">6月</div>
<div class="a" style="left:507.00px;top:724.80px;width:34.00px;height:17.50px;background:#10a45a;border:1px solid #9ee3bd;box-sizing:border-box"></div>
<div class="a t" style="left:494.00px;width:60px;text-align:center;top:722.89px;line-height:17.22px;font-size:12.3px;color:#0b2a16;">7月</div>
<div class="a" style="left:545.00px;top:724.80px;width:35.00px;height:17.50px;background:#10a45a;border:1px solid #9ee3bd;box-sizing:border-box"></div>
<div class="a t" style="left:532.50px;width:60px;text-align:center;top:722.89px;line-height:17.22px;font-size:12.3px;color:#0b2a16;">8月</div>
<div class="a" style="left:583.00px;top:724.80px;width:35.00px;height:17.50px;background:#10a45a;border:1px solid #9ee3bd;box-sizing:border-box"></div>
<div class="a t" style="left:570.50px;width:60px;text-align:center;top:722.89px;line-height:17.22px;font-size:12.3px;color:#0b2a16;">9月</div>
<div class="a" style="left:622.00px;top:724.80px;width:41.00px;height:17.50px;background:#10a45a;border:1px solid #9ee3bd;box-sizing:border-box"></div>
<div class="a t" style="left:612.50px;width:60px;text-align:center;top:722.89px;line-height:17.22px;font-size:12.3px;color:#0b2a16;">10月</div>
<div class="a" style="left:667.50px;top:724.80px;width:42.00px;height:17.50px;background:#10a45a;border:1px solid #9ee3bd;box-sizing:border-box"></div>
<div class="a t" style="left:658.50px;width:60px;text-align:center;top:722.89px;line-height:17.22px;font-size:12.3px;color:#0b2a16;">11月</div>
<div class="a" style="left:712.50px;top:724.80px;width:42.50px;height:17.50px;background:#10a45a;border:1px solid #9ee3bd;box-sizing:border-box"></div>
<div class="a t" style="left:703.75px;width:60px;text-align:center;top:722.89px;line-height:17.22px;font-size:12.3px;color:#0b2a16;">12月</div>
<div class="a t" style="left:751.88px;width:60px;text-align:center;top:722.40px;line-height:18.20px;font-size:13px;color:#444;">第1周</div>
<div class="a" style="left:808.75px;top:728.00px;width:1.00px;height:13.00px;background:#c0c0c0"></div>
<div class="a t" style="left:804.12px;width:60px;text-align:center;top:722.40px;line-height:18.20px;font-size:13px;color:#444;">第2周</div>
<div class="a" style="left:859.50px;top:728.00px;width:1.00px;height:13.00px;background:#c0c0c0"></div>
<div class="a t" style="left:855.00px;width:60px;text-align:center;top:722.40px;line-height:18.20px;font-size:13px;color:#444;">第3周</div>
<div class="a" style="left:910.50px;top:728.00px;width:1.00px;height:13.00px;background:#c0c0c0"></div>
<div class="a t" style="left:906.12px;width:60px;text-align:center;top:722.40px;line-height:18.20px;font-size:13px;color:#444;">第4周</div>
<div class="a" style="left:961.75px;top:728.00px;width:1.00px;height:13.00px;background:#c0c0c0"></div>
<div class="a t" style="left:957.12px;width:60px;text-align:center;top:722.40px;line-height:18.20px;font-size:13px;color:#444;">第5周</div>
<div class="a" style="left:1012.50px;top:728.00px;width:1.00px;height:13.00px;background:#c0c0c0"></div>
<div class="a t" style="left:1007.88px;width:60px;text-align:center;top:722.40px;line-height:18.20px;font-size:13px;color:#444;">第6周</div>
<div class="a" style="left:1063.25px;top:728.00px;width:1.00px;height:13.00px;background:#c0c0c0"></div>
<div class="a t" style="left:1058.75px;width:60px;text-align:center;top:722.40px;line-height:18.20px;font-size:13px;color:#444;">第7周</div>
<div class="a" style="left:1114.25px;top:728.00px;width:1.00px;height:13.00px;background:#c0c0c0"></div>
<div class="a t" style="left:1110.00px;width:60px;text-align:center;top:722.40px;line-height:18.20px;font-size:13px;color:#444;">第8周</div>
<div class="a" style="left:1165.75px;top:728.00px;width:1.00px;height:13.00px;background:#c0c0c0"></div>
<div class="a t" style="left:1161.25px;width:60px;text-align:center;top:722.40px;line-height:18.20px;font-size:13px;color:#444;">第9周</div>
<div class="a" style="left:1216.75px;top:728.00px;width:1.00px;height:13.00px;background:#c0c0c0"></div>
<div class="a t" style="left:1225.00px;top:722.40px;line-height:18.20px;font-size:13px;color:#444;">第10| ...</div>
<svg class="a" style="left:1280.00px;top:725.50px;" width="16" height="16" viewBox="0 0 16 16"><circle cx="8" cy="8" r="6.8" fill="none" stroke="#555" stroke-width="1.1"/><path d="M8 4v8M4 8h8" stroke="#555" stroke-width="1.2"/></svg>
<div class="a t" style="left:1304.50px;width:10px;text-align:center;top:725.30px;line-height:15.40px;font-size:11px;color:#999;">⁝</div>
<div class="a" style="left:1322.00px;top:726.40px;width:100.00px;height:14.00px;background:#fff;border:1px solid #bdbdbd;box-sizing:border-box"></div>
<div class="a" style="left:1336.00px;top:726.40px;width:69.00px;height:14.00px;background:#fff;border:1px solid #bdbdbd;box-sizing:border-box"></div>
<svg class="a" style="left:1326.50px;top:729.50px;" width="6" height="8" viewBox="0 0 6 8"><path d="M5 0.5v7L0.5 4z" fill="#222"/></svg>
<svg class="a" style="left:1411.50px;top:729.50px;" width="6" height="8" viewBox="0 0 6 8"><path d="M1 0.5v7L5.5 4z" fill="#222"/></svg>
<div class="a" style="left:0.00px;top:744.30px;width:1440.00px;height:21.70px;background:#f6f6f6"></div>
<div class="a t" style="left:10.00px;top:747.09px;line-height:15.82px;font-size:11.3px;color:#444;">就绪</div>
<svg class="a" style="left:51.00px;top:748.00px;" width="14" height="14" viewBox="0 0 14 14"><path d="M10 3.5A5 5 0 1 0 7 12" fill="none" stroke="#555" stroke-width="1.1" stroke-dasharray="2 1.2"/><path d="M6.5 1v5" stroke="#555" stroke-width="1.1"/><path d="M8 8l5 5M13 8l-5 5" stroke="#333" stroke-width="1.3"/></svg>
<div class="a t" style="left:67.00px;top:747.09px;line-height:15.82px;font-size:11.3px;color:#333;font-weight:bold;font-weight:600">辅助功能: 调查</div>
<div class="a" style="left:1156.70px;top:745.00px;width:35.30px;height:19.60px;background:#d6d6d6"></div>
<svg class="a" style="left:1167.00px;top:748.00px;" width="15" height="14" viewBox="0 0 15 14"><path d="M1 1h13v12H1zM1 4.5h13M1 8.5h13M5 1v12M9.5 1v12" fill="none" stroke="#555" stroke-width="0.9"/></svg>
<svg class="a" style="left:1204.00px;top:748.00px;" width="15" height="14" viewBox="0 0 15 14"><rect x="1" y="1" width="13" height="12" fill="none" stroke="#666" stroke-width="1"/><rect x="4" y="3.5" width="7" height="7" fill="none" stroke="#666" stroke-width="0.9"/><path d="M5.5 6h4M5.5 8h4" stroke="#666" stroke-width="0.8"/></svg>
<svg class="a" style="left:1241.00px;top:748.00px;" width="15" height="14" viewBox="0 0 15 14"><path d="M1 1h13v12H1zM1 9h7V1M4.5 1v5" fill="none" stroke="#666" stroke-width="1"/></svg>
<div class="a" style="left:1273.50px;top:755.00px;width:6.50px;height:1.00px;background:#555"></div>
<div class="a" style="left:1285.80px;top:755.00px;width:93.20px;height:1.00px;background:#333"></div>
<div class="a" style="left:1330.70px;top:749.00px;width:4.00px;height:12.00px;background:#333"></div>
<div class="a" style="left:1383.00px;top:755.00px;width:9.00px;height:1.00px;background:#555"></div>
<div class="a" style="left:1387.50px;top:750.50px;width:1.00px;height:9.00px;background:#555"></div>
<div class="a t" style="left:1372.70px;width:60px;text-align:right;top:747.10px;line-height:16.80px;font-size:12px;color:#444;">100%</div>
<div class="a" style="left:0.00px;top:766.00px;width:1440.00px;height:44.00px;background:linear-gradient(90deg,#e2e1e3 0%,#dddddd 45%,#e3e1e6 70%,#e6e3e9 100%)"></div>
<svg class="a" style="left:18.00px;top:777.00px;" width="23" height="23" viewBox="0 0 23 23"><defs><linearGradient id="wg" x1="0" y1="0" x2="1" y2="1"><stop offset="0" stop-color="#4cc0f2"/><stop offset="1" stop-color="#1877d0"/></linearGradient></defs><rect x="0" y="0" width="23" height="23" fill="url(#wg)"/><path d="M11.5 0v23M0 11.5h23" stroke="#bfe6fa" stroke-width="0.8"/></svg>
<svg class="a" style="left:61.00px;top:776.00px;" width="22" height="22" viewBox="0 0 22 22"><circle cx="12.5" cy="9" r="7" fill="none" stroke="#1a1a1a" stroke-width="1.6"/><path d="M7.5 14L2 19.5" stroke="#1a1a1a" stroke-width="2" stroke-linecap="round"/></svg>
<svg class="a" style="left:102.00px;top:776.00px;" width="22" height="22" viewBox="0 0 22 22"><circle cx="11" cy="11" r="10" fill="#2f8fe8"/><path d="M5 12h12c0-4-2.5-6.5-6-6.5S4.5 8.5 4.5 12s2.5 6 6.5 6c2.5 0 4.5-1 5.5-2.5" fill="none" stroke="#fff" stroke-width="2.4"/></svg>
<div class="a" style="left:137.00px;top:767.00px;width:35.00px;height:38.00px;background:#f0dfe1"></div>
<svg class="a" style="left:142.00px;top:776.00px;" width="20" height="20" viewBox="0 0 20 20"><path d="M10 2c-5 0-8 3-8 7 0 2.5 1.5 4.5 3.5 5.5L5 18l3.5-2c0.5 0.1 1 0.2 1.5 0.2 5 0 8-3 8-7s-3-7.2-8-7.2z" fill="#19b35a"/><circle cx="13" cy="13" r="4" fill="#fff" opacity="0.85"/></svg>
<div class="a" style="left:152.00px;top:804.00px;width:6.00px;height:2.00px;background:#c43a4a"></div>
<div class="a" style="left:178.00px;top:767.00px;width:35.00px;height:38.00px;background:#e8e8e8"></div>
<svg class="a" style="left:183.00px;top:776.00px;" width="25" height="21" viewBox="0 0 25 21"><rect x="6" y="0.5" width="18" height="20" rx="1.5" fill="#1f7a45"/><rect x="15" y="0.5" width="9" height="20" fill="#18a05a"/><rect x="0.5" y="4" width="13" height="13" rx="1.2" fill="#0e5c32"/><path d="M4 7l5 7M9 7l-5 7" stroke="#fff" stroke-width="1.5"/></svg>
<div class="a" style="left:189.00px;top:803.00px;width:14.00px;height:2.50px;background:#1a6fc8"></div>
<svg class="a" style="left:228.00px;top:777.00px;" width="19" height="17" viewBox="0 0 19 17"><rect x="1" y="1" width="17" height="13" rx="1" fill="none" stroke="#3fb39a" stroke-width="2"/><path d="M11 15h6" stroke="#aaa" stroke-width="2" stroke-dasharray="2 1"/></svg>
<div class="a" style="left:233.00px;top:804.00px;width:6.00px;height:1.50px;background:#999"></div>
<svg class="a" style="left:268.00px;top:776.00px;" width="21" height="20" viewBox="0 0 21 20"><rect x="0.5" y="0.5" width="20" height="19" rx="3" fill="#1877f2"/><path d="M3 13c2-4 4-6 5-4s2 2 3 0 3-2 4 0 2 4 3 4" fill="none" stroke="#fff" stroke-width="2.4"/></svg>
<div class="a" style="left:275.00px;top:804.00px;width:6.00px;height:1.50px;background:#999"></div>
<div class="a" style="left:307.00px;top:776.00px;width:22.00px;height:22.00px;background:#f3f3f3;border-radius:3px"></div>
<svg class="a" style="left:310.00px;top:780.00px;" width="17" height="15" viewBox="0 0 17 15"><path d="M1 13l4-6 2 3M7 13l5-9 2 4" fill="none" stroke="#1aa88a" stroke-width="2.4"/><circle cx="5" cy="2.5" r="1.5" fill="#1aa88a"/></svg>
<div class="a" style="left:315.00px;top:804.00px;width:6.00px;height:1.50px;background:#999"></div>
<svg class="a" style="left:1006.00px;top:777.00px;" width="23" height="21" viewBox="0 0 23 21"><path d="M1 2c0-1 1-1.5 2-1.5h16.5c1 0 2 0.5 2 1.5v15c0 1-1 1.5-2 1.5H7l-4 2v-2H3c-1 0-2-0.5-2-1.5z" fill="#2fb5e8"/><path d="M7 5v10M14 5l-5 5 5 5" fill="none" stroke="#fff" stroke-width="2.2"/></svg>
<svg class="a" style="left:1040.00px;top:782.00px;" width="13" height="8" viewBox="0 0 13 8"><path d="M1 7l5.5-5.5L12 7" fill="none" stroke="#222" stroke-width="1.3"/></svg>
<svg class="a" style="left:1061.00px;top:779.00px;" width="14" height="16" viewBox="0 0 14 16"><rect x="0.5" y="1" width="13" height="14" rx="2" fill="#f5d12a"/><rect x="4" y="4" width="6" height="8" fill="#3aa860"/></svg>
<svg class="a" style="left:1084.00px;top:779.00px;" width="15" height="16" viewBox="0 0 15 16"><path d="M7.5 1L14 3.5v5c0 3.5-3 6-6.5 7C4 14.5 1 12 1 8.5v-5z" fill="none" stroke="#2a5bd7" stroke-width="1.5"/><path d="M4 7l3.5 3L11 7" fill="none" stroke="#2a5bd7" stroke-width="1.5"/></svg>
<svg class="a" style="left:1112.00px;top:776.00px;" width="24" height="24" viewBox="0 0 24 24"><circle cx="12" cy="12" r="10.5" fill="#fff" stroke="#444" stroke-width="1.6"/><path d="M3 16a10 10 0 0 0 18 0" fill="none" stroke="#3dbd7d" stroke-width="2"/></svg>
<div class="a t" style="left:1109.00px;width:30px;text-align:center;top:779.60px;line-height:16.80px;font-size:12px;color:#111;font-weight:bold;">61</div>
<div class="a t" style="left:1147.00px;top:771.95px;line-height:16.10px;font-size:11.5px;color:#222;"><span style="color:#3fa0e0;font-size:6px">▲</span> 7.5 <span style="font-size:8.5px">K/s</span></div>
<div class="a t" style="left:1147.00px;top:786.95px;line-height:16.10px;font-size:11.5px;color:#222;"><span style="color:#3dbd7d;font-size:6px">▼</span> 10.7 <span style="font-size:8.5px">K/s</span></div>
<div class="a t" style="left:1205.00px;width:20px;text-align:center;top:778.20px;line-height:19.60px;font-size:14px;color:#222;">中</div>
<div class="a t" style="left:1241.50px;width:20px;text-align:center;top:778.20px;line-height:19.60px;font-size:14px;color:#222;">五</div>
<svg class="a" style="left:1277.00px;top:780.00px;" width="19" height="15" viewBox="0 0 19 15"><path d="M1.5 5.5a11 11 0 0 1 16 0M4 8.5a7.5 7.5 0 0 1 11 0M6.5 11.2a4 4 0 0 1 6 0" fill="none" stroke="#222" stroke-width="1.5"/><circle cx="9.5" cy="13.5" r="1.2" fill="#222"/></svg>
<svg class="a" style="left:1300.00px;top:780.00px;" width="18" height="15" viewBox="0 0 18 15"><path d="M1 5h3l4-3.5v12L4 10H1z" fill="none" stroke="#222" stroke-width="1.2"/><path d="M11 4.5c1.5 1.5 1.5 4.5 0 6M13.5 2.5c2.5 2.5 2.5 8.5 0 11" fill="none" stroke="#222" stroke-width="1.2"/></svg>
<svg class="a" style="left:1324.00px;top:781.00px;" width="16" height="13" viewBox="0 0 16 13"><rect x="2" y="3" width="13" height="8" fill="#222"/><rect x="0" y="5" width="2" height="4" fill="#222"/><path d="M4 0v3M8 0v3" stroke="#222" stroke-width="1.2"/></svg>
<div class="a t" style="left:1340.60px;width:60px;text-align:right;top:771.59px;line-height:15.82px;font-size:11.3px;color:#222;">20:42</div>
<div class="a t" style="left:1340.60px;width:60px;text-align:right;top:787.59px;line-height:15.82px;font-size:11.3px;color:#222;">2025/1/3</div>
<svg class="a" style="left:1409.00px;top:781.00px;" width="15" height="15" viewBox="0 0 15 15"><path d="M8 1.5c-3 1-4.5 3.5-4 6.5s3 5 6 5c2 0 3.5-1 4.5-2.5-3 0.5-6-1.5-6.5-4.5C7.6 4.5 7.5 3 8 1.5z" fill="none" stroke="#222" stroke-width="1.2"/></svg>
</body></html>
